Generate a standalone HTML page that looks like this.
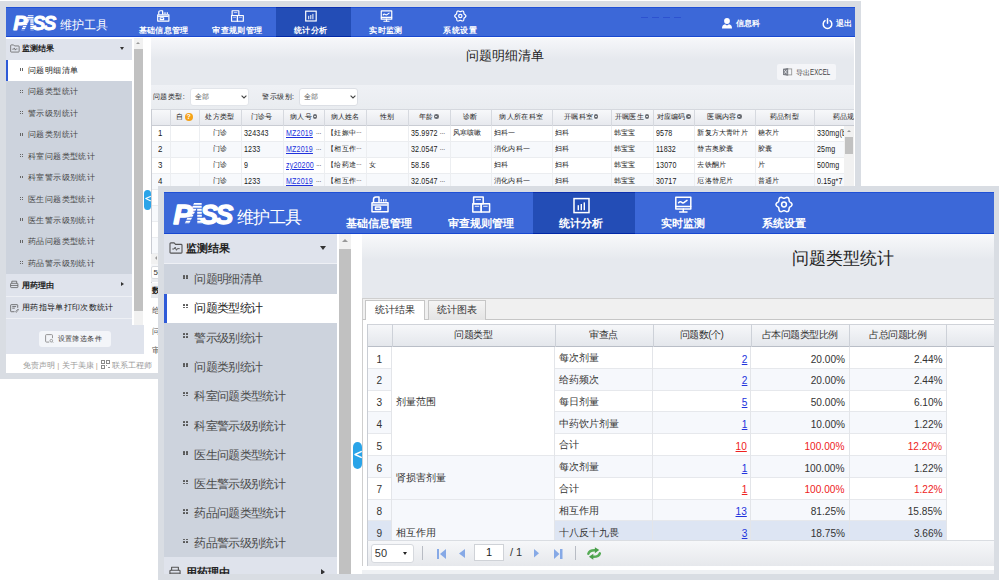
<!DOCTYPE html><html><head><meta charset="utf-8"><style>
html,body{margin:0;padding:0;background:#fff;width:1000px;height:582px;overflow:hidden;position:relative;font-family:"Liberation Sans",sans-serif;}
div{position:absolute;box-sizing:border-box;}
.t{white-space:nowrap;color:#333;}
svg{position:absolute;overflow:visible}
</style></head><body>
<div style="left:0px;top:1px;width:861px;height:378px;background:#d9dde3;"></div>
<div style="left:6px;top:7px;width:849px;height:366px;background:#fff;"></div>
<div style="left:6px;top:7px;width:849px;height:30.4px;background:#3c68d8;border-top:1px solid #1f50d6;border-bottom:1.6px solid #1848d0;"></div>
<svg style="left:13.2px;top:15.0px;width:43.8px;height:15.6px;" viewBox="0 0 60 21"><defs><clipPath id="acb"><rect x="0" y="-0.30" width="60" height="2.0"/><rect x="0" y="2.65" width="60" height="2.0"/><rect x="0" y="5.60" width="60" height="2.0"/><rect x="0" y="8.55" width="60" height="2.0"/><rect x="0" y="11.50" width="60" height="2.0"/><rect x="0" y="14.45" width="60" height="2.0"/><rect x="0" y="17.40" width="60" height="2.0"/><rect x="0" y="20.35" width="60" height="2.0"/></clipPath></defs><g fill="#fff" stroke="#fff" stroke-width="1.3" stroke-linejoin="round" font-family="Liberation Sans" font-weight="bold" font-style="italic" font-size="28"><text x="0.2" y="20.4" textLength="19" lengthAdjust="spacingAndGlyphs">P</text><text x="26.6" y="20.4" textLength="17.6" lengthAdjust="spacingAndGlyphs">S</text><text x="41.8" y="20.4" textLength="17.6" lengthAdjust="spacingAndGlyphs">S</text></g><g clip-path="url(#acb)" fill="#fff"><path d="M11.2,20.6 L20.6,0 L28.1,0 L28.4,20.6 Z M15.6,20.6 L23.6,4.5 L23.8,20.6 Z" fill-rule="evenodd"/></g></svg>
<div class="t" style="left:59.5px;top:16.8px;height:16px;line-height:16px;font-size:12px;text-align:left;color:#fff;letter-spacing:0.3px;">维护工具</div>
<div style="left:275.9px;top:7px;width:75px;height:30.4px;background:#234db6;border-top:1px solid #0c30b0;border-bottom:1.6px solid #0028a8;"></div>
<svg style="left:157.29999999999998px;top:9.6px;width:12.6px;height:12px;" viewBox="0 0 18 17"><g fill="none" stroke="#fff" stroke-width="1.7" stroke-linejoin="round"><rect x="1" y="6.8" width="16" height="9"/><line x1="1.5" y1="9" x2="16.5" y2="9"/><rect x="4.5" y="11" width="5" height="2.6"/><path d="M2.5,6.5 V3.5 Q2.5,1 5,1 H8 V6.5"/></g><g fill="#fff"><rect x="9.6" y="3.2" width="1.3" height="2.4"/><rect x="12" y="3.2" width="1.3" height="2.4"/><rect x="14.3" y="3.2" width="1.3" height="2.4"/></g></svg>
<div class="t" style="left:126.6px;top:24.5px;width:74px;height:11px;line-height:11px;font-size:8px;text-align:center;color:#fff;font-weight:bold;letter-spacing:0.35px;">基础信息管理</div>
<svg style="left:231.2px;top:9.6px;width:12.6px;height:12px;" viewBox="0 0 18 17"><g fill="none" stroke="#fff" stroke-width="1.7" stroke-linejoin="round"><rect x="1.6" y="1" width="9.6" height="6.8"/><rect x="0.8" y="7.8" width="8.4" height="8.2"/><rect x="9.2" y="7.8" width="8.4" height="8.2"/></g><g stroke="#fff" stroke-width="1.1" opacity="0.85"><line x1="4" y1="3.6" x2="9" y2="3.6"/><line x1="2.8" y1="10.3" x2="7.2" y2="10.3"/><line x1="11.2" y1="10.3" x2="15.6" y2="10.3"/></g></svg>
<div class="t" style="left:200.5px;top:24.5px;width:74px;height:11px;line-height:11px;font-size:8px;text-align:center;color:#fff;font-weight:bold;letter-spacing:0.35px;">审查规则管理</div>
<svg style="left:304.5px;top:9.6px;width:12.6px;height:12px;" viewBox="0 0 18 17"><g fill="none" stroke="#fff" stroke-width="1.7"><rect x="1" y="1.6" width="15" height="14"/></g><g fill="#fff"><rect x="4.6" y="8.2" width="1.4" height="5"/><rect x="7.6" y="7" width="1.4" height="6.2"/><rect x="10.6" y="5.4" width="1.4" height="7.8"/></g></svg>
<div class="t" style="left:273.8px;top:24.5px;width:74px;height:11px;line-height:11px;font-size:8px;text-align:center;color:#fff;font-weight:bold;letter-spacing:0.35px;">统计分析</div>
<svg style="left:379.7px;top:9.6px;width:12.6px;height:12px;" viewBox="0 0 18 17"><g fill="none" stroke="#fff" stroke-width="1.7" stroke-linejoin="round" stroke-linecap="round"><rect x="1.8" y="1.2" width="15" height="11.8"/><line x1="2" y1="10.6" x2="16.6" y2="10.6"/><path d="M4.6,6.8 Q6,5 7.5,6.2 Q9,7.6 10.5,6.2 L13,4.4"/><line x1="9.3" y1="13" x2="9.3" y2="15.6"/><line x1="5.6" y1="16" x2="13" y2="16"/></g></svg>
<div class="t" style="left:349.0px;top:24.5px;width:74px;height:11px;line-height:11px;font-size:8px;text-align:center;color:#fff;font-weight:bold;letter-spacing:0.35px;">实时监测</div>
<svg style="left:453.9px;top:9.6px;width:12.6px;height:12px;" viewBox="0 0 18 17"><g fill="none" stroke="#fff" stroke-width="1.7" stroke-linejoin="round"><path d="M17.00,8.50 L16.91,9.02 L16.67,9.51 L16.30,9.95 L15.86,10.34 L15.40,10.67 L14.97,10.97 L14.62,11.27 L14.37,11.60 L14.21,11.98 L14.13,12.43 L14.08,12.95 L14.02,13.52 L13.91,14.10 L13.71,14.64 L13.41,15.09 L13.00,15.43 L12.51,15.61 L11.96,15.65 L11.39,15.55 L10.84,15.36 L10.32,15.13 L9.84,14.91 L9.41,14.76 L9.00,14.70 L8.59,14.76 L8.16,14.91 L7.68,15.13 L7.16,15.36 L6.61,15.55 L6.04,15.65 L5.49,15.61 L5.00,15.43 L4.59,15.09 L4.29,14.64 L4.09,14.10 L3.98,13.52 L3.92,12.95 L3.87,12.43 L3.79,11.98 L3.63,11.60 L3.38,11.27 L3.03,10.97 L2.60,10.67 L2.14,10.34 L1.70,9.95 L1.33,9.51 L1.09,9.02 L1.00,8.50 L1.09,7.98 L1.33,7.49 L1.70,7.05 L2.14,6.66 L2.60,6.33 L3.03,6.03 L3.38,5.73 L3.63,5.40 L3.79,5.02 L3.87,4.57 L3.92,4.05 L3.98,3.48 L4.09,2.90 L4.29,2.36 L4.59,1.91 L5.00,1.57 L5.49,1.39 L6.04,1.35 L6.61,1.45 L7.16,1.64 L7.68,1.87 L8.16,2.09 L8.59,2.24 L9.00,2.30 L9.41,2.24 L9.84,2.09 L10.32,1.87 L10.84,1.64 L11.39,1.45 L11.96,1.35 L12.51,1.39 L13.00,1.57 L13.41,1.91 L13.71,2.36 L13.91,2.90 L14.02,3.48 L14.08,4.05 L14.13,4.57 L14.21,5.02 L14.37,5.40 L14.62,5.73 L14.97,6.03 L15.40,6.33 L15.86,6.66 L16.30,7.05 L16.67,7.49 L16.91,7.98Z"/><circle cx="9" cy="8.5" r="2.4"/></g></svg>
<div class="t" style="left:423.2px;top:24.5px;width:74px;height:11px;line-height:11px;font-size:8px;text-align:center;color:#fff;font-weight:bold;letter-spacing:0.35px;">系统设置</div>
<svg style="left:722px;top:18.2px;width:10px;height:10.5px;" viewBox="0 0 10 10.5"><g fill="#fff"><circle cx="5" cy="3" r="2.9"/><path d="M0,10.5 Q0,6.6 3,6.3 L5,7.4 L7,6.3 Q10,6.6 10,10.5 Z"/></g></svg>
<div class="t" style="left:736.4px;top:17.5px;height:11px;line-height:11px;font-size:8.2px;text-align:left;color:#fff;font-weight:bold;">信息科</div>
<svg style="left:821.6px;top:17.8px;width:11px;height:11px;" viewBox="0 0 11 11"><g fill="none" stroke="#fff" stroke-width="1.5" stroke-linecap="round"><path d="M3,2.6 A4.3,4.3 0 1 0 8,2.6"/><line x1="5.5" y1="0.8" x2="5.5" y2="5.2"/></g></svg>
<div class="t" style="left:835.5px;top:17.5px;height:11px;line-height:11px;font-size:8.2px;text-align:left;color:#fff;font-weight:bold;">退出</div>
<div style="left:641px;top:17.0px;width:40px;height:1px;background:repeating-linear-gradient(90deg,rgba(30,60,200,0.5) 0 7px,transparent 7px 11px);"></div>
<div style="left:6px;top:38px;width:126.2px;height:316px;background:#dfe3ec;"></div>
<div style="left:6px;top:37.4px;width:849px;height:1.6px;background:#fff;"></div>
<svg style="left:10px;top:43.5px;width:9.8px;height:9px;" viewBox="0 0 15 13"><g fill="none" stroke="#555" stroke-width="1.1" stroke-linejoin="round"><path d="M1,2 Q1,1 2,1 H5.5 L7,2.6 H13 Q14,2.6 14,3.6 V11 Q14,12 13,12 H2 Q1,12 1,11 Z"/><path d="M3.5,7.6 H5.5 L6.6,5.6 L8,9 L9,7.2 H11.5" stroke-width="0.9900000000000001"/></g></svg>
<div class="t" style="left:22px;top:42px;height:12px;line-height:12px;font-size:8.4px;text-align:left;color:#222;font-weight:bold;">监测结果</div>
<div style="left:120.4px;top:46.5px;width:0;height:0;border-left:2.6px solid transparent;border-right:2.6px solid transparent;border-top:3.4px solid #333;"></div>
<div style="left:6px;top:59.8px;width:126.2px;height:214.20000000000002px;background:#cdd3dd;"></div>
<div style="left:6px;top:59.8px;width:126.2px;height:21.42px;background:#fff;border-left:2px solid #2f5bd8;"></div>
<div style="left:19.8px;top:68.39999999999999px;width:1.25px;height:1.25px;background:#666;"></div>
<div style="left:19.8px;top:70.1px;width:1.25px;height:1.25px;background:#666;"></div>
<div style="left:21.6px;top:68.39999999999999px;width:1.25px;height:1.25px;background:#666;"></div>
<div style="left:21.6px;top:70.1px;width:1.25px;height:1.25px;background:#666;"></div>
<div class="t" style="left:28px;top:65.0px;height:12px;line-height:12px;font-size:8px;text-align:left;letter-spacing:0.4px;color:#222;">问题明细清单</div>
<div style="left:19.8px;top:89.82px;width:1.25px;height:1.25px;background:#666;"></div>
<div style="left:19.8px;top:91.52px;width:1.25px;height:1.25px;background:#666;"></div>
<div style="left:21.6px;top:89.82px;width:1.25px;height:1.25px;background:#666;"></div>
<div style="left:21.6px;top:91.52px;width:1.25px;height:1.25px;background:#666;"></div>
<div class="t" style="left:28px;top:86.42px;height:12px;line-height:12px;font-size:8px;text-align:left;letter-spacing:0.4px;color:#444;">问题类型统计</div>
<div style="left:19.8px;top:111.24px;width:1.25px;height:1.25px;background:#666;"></div>
<div style="left:19.8px;top:112.94px;width:1.25px;height:1.25px;background:#666;"></div>
<div style="left:21.6px;top:111.24px;width:1.25px;height:1.25px;background:#666;"></div>
<div style="left:21.6px;top:112.94px;width:1.25px;height:1.25px;background:#666;"></div>
<div class="t" style="left:28px;top:107.84px;height:12px;line-height:12px;font-size:8px;text-align:left;letter-spacing:0.4px;color:#444;">警示级别统计</div>
<div style="left:19.8px;top:132.66px;width:1.25px;height:1.25px;background:#666;"></div>
<div style="left:19.8px;top:134.35999999999999px;width:1.25px;height:1.25px;background:#666;"></div>
<div style="left:21.6px;top:132.66px;width:1.25px;height:1.25px;background:#666;"></div>
<div style="left:21.6px;top:134.35999999999999px;width:1.25px;height:1.25px;background:#666;"></div>
<div class="t" style="left:28px;top:129.26px;height:12px;line-height:12px;font-size:8px;text-align:left;letter-spacing:0.4px;color:#444;">问题类别统计</div>
<div style="left:19.8px;top:154.08px;width:1.25px;height:1.25px;background:#666;"></div>
<div style="left:19.8px;top:155.78px;width:1.25px;height:1.25px;background:#666;"></div>
<div style="left:21.6px;top:154.08px;width:1.25px;height:1.25px;background:#666;"></div>
<div style="left:21.6px;top:155.78px;width:1.25px;height:1.25px;background:#666;"></div>
<div class="t" style="left:28px;top:150.68px;height:12px;line-height:12px;font-size:8px;text-align:left;letter-spacing:0.4px;color:#444;">科室问题类型统计</div>
<div style="left:19.8px;top:175.5px;width:1.25px;height:1.25px;background:#666;"></div>
<div style="left:19.8px;top:177.2px;width:1.25px;height:1.25px;background:#666;"></div>
<div style="left:21.6px;top:175.5px;width:1.25px;height:1.25px;background:#666;"></div>
<div style="left:21.6px;top:177.2px;width:1.25px;height:1.25px;background:#666;"></div>
<div class="t" style="left:28px;top:172.1px;height:12px;line-height:12px;font-size:8px;text-align:left;letter-spacing:0.4px;color:#444;">科室警示级别统计</div>
<div style="left:19.8px;top:196.92px;width:1.25px;height:1.25px;background:#666;"></div>
<div style="left:19.8px;top:198.61999999999998px;width:1.25px;height:1.25px;background:#666;"></div>
<div style="left:21.6px;top:196.92px;width:1.25px;height:1.25px;background:#666;"></div>
<div style="left:21.6px;top:198.61999999999998px;width:1.25px;height:1.25px;background:#666;"></div>
<div class="t" style="left:28px;top:193.51999999999998px;height:12px;line-height:12px;font-size:8px;text-align:left;letter-spacing:0.4px;color:#444;">医生问题类型统计</div>
<div style="left:19.8px;top:218.34px;width:1.25px;height:1.25px;background:#666;"></div>
<div style="left:19.8px;top:220.04px;width:1.25px;height:1.25px;background:#666;"></div>
<div style="left:21.6px;top:218.34px;width:1.25px;height:1.25px;background:#666;"></div>
<div style="left:21.6px;top:220.04px;width:1.25px;height:1.25px;background:#666;"></div>
<div class="t" style="left:28px;top:214.94px;height:12px;line-height:12px;font-size:8px;text-align:left;letter-spacing:0.4px;color:#444;">医生警示级别统计</div>
<div style="left:19.8px;top:239.76000000000002px;width:1.25px;height:1.25px;background:#666;"></div>
<div style="left:19.8px;top:241.46px;width:1.25px;height:1.25px;background:#666;"></div>
<div style="left:21.6px;top:239.76000000000002px;width:1.25px;height:1.25px;background:#666;"></div>
<div style="left:21.6px;top:241.46px;width:1.25px;height:1.25px;background:#666;"></div>
<div class="t" style="left:28px;top:236.36px;height:12px;line-height:12px;font-size:8px;text-align:left;letter-spacing:0.4px;color:#444;">药品问题类型统计</div>
<div style="left:19.8px;top:261.18000000000006px;width:1.25px;height:1.25px;background:#666;"></div>
<div style="left:19.8px;top:262.88000000000005px;width:1.25px;height:1.25px;background:#666;"></div>
<div style="left:21.6px;top:261.18000000000006px;width:1.25px;height:1.25px;background:#666;"></div>
<div style="left:21.6px;top:262.88000000000005px;width:1.25px;height:1.25px;background:#666;"></div>
<div class="t" style="left:28px;top:257.78000000000003px;height:12px;line-height:12px;font-size:8px;text-align:left;letter-spacing:0.4px;color:#444;">药品警示级别统计</div>
<svg style="left:10px;top:280.2px;width:8.5px;height:8.5px;" viewBox="0 0 14 13"><g fill="none" stroke="#555" stroke-width="1.2" stroke-linejoin="round"><path d="M3,5 V1.5 H11 V5"/><rect x="1" y="5" width="12" height="7" rx="1"/><line x1="1" y1="8.5" x2="13" y2="8.5"/></g></svg>
<div class="t" style="left:22px;top:278.8px;height:12px;line-height:12px;font-size:8.4px;text-align:left;color:#222;font-weight:bold;">用药理由</div>
<div style="left:120.8px;top:282.4px;width:0;height:0;border-top:2.5px solid transparent;border-bottom:2.5px solid transparent;border-left:3px solid #333;"></div>
<div style="left:6px;top:295.7px;width:126.2px;height:1.3px;background:#eef0f5;"></div>
<svg style="left:10px;top:303.5px;width:9px;height:9px;" viewBox="0 0 14 14"><g fill="none" stroke="#555" stroke-width="1.2" stroke-linejoin="round"><path d="M12,6 V2 Q12,1 11,1 H2 Q1,1 1,2 V11 Q1,12 2,12 H7"/><line x1="3.5" y1="4" x2="9.5" y2="4"/><line x1="3.5" y1="6.5" x2="7.5" y2="6.5"/><path d="M8.5,12 L12.5,8 L13.5,9 L9.5,13 Z" stroke-width="0.96"/></g></svg>
<div class="t" style="left:22px;top:302px;height:12px;line-height:12px;font-size:8px;text-align:left;color:#111;letter-spacing:0.35px;">用药指导单打印次数统计</div>
<div style="left:6px;top:318px;width:126.2px;height:1.3px;background:#eef0f5;"></div>
<div style="left:39px;top:330.5px;width:71.8px;height:16.7px;background:#f3f5f9;border-radius:3px;"></div>
<svg style="left:44.9px;top:334px;width:8.4px;height:9px;" viewBox="0 0 14 15"><path d="M12.5,7 V2.5 Q12.5,1 11,1 H2.5 Q1,1 1,2.5 V12 Q1,13.5 2.5,13.5 H7" fill="none" stroke="#8a8a8a" stroke-width="1.5"/><circle cx="10.5" cy="11.2" r="2.2" fill="none" stroke="#8a8a8a" stroke-width="1.3"/><line x1="12.1" y1="12.8" x2="13.6" y2="14.3" stroke="#8a8a8a" stroke-width="1.3"/></svg>
<div class="t" style="left:57.5px;top:332.8px;height:12px;line-height:12px;font-size:7px;text-align:left;color:#333;letter-spacing:0.45px;">设置筛选条件</div>
<div style="left:6px;top:353.8px;width:849px;height:19.2px;background:#fff;"></div>
<div class="t" style="left:23px;top:359.5px;height:12px;line-height:12px;font-size:8px;text-align:left;color:#999;">免责声明 <span style='color:#b8a48c'>|</span> 关于美康 <span style='color:#b8a48c'>|</span></div>
<div style="left:100.8px;top:360.2px;width:4.2px;height:3.9px;border:0.8px solid #8a8a8a;"></div>
<div style="left:105.9px;top:360.2px;width:4.2px;height:3.9px;border:0.8px solid #8a8a8a;"></div>
<div style="left:100.8px;top:364.8px;width:4.2px;height:3.9px;border:0.8px solid #8a8a8a;"></div>
<div style="left:106.2px;top:365.2px;width:1.2px;height:1.2px;background:#999;"></div>
<div style="left:108.4px;top:367.2px;width:1.2px;height:1.2px;background:#999;"></div>
<div class="t" style="left:111.5px;top:359.5px;height:12px;line-height:12px;font-size:8px;text-align:left;color:#999;">联系工程师</div>
<div style="left:133.6px;top:38px;width:9.6px;height:286.5px;background:#f1f1f1;"></div>
<div style="left:133.6px;top:49px;width:9.6px;height:262px;background:#c1c1c1;"></div>
<div style="left:136.3px;top:41.8px;width:0;height:0;border-left:2.2px solid transparent;border-right:2.2px solid transparent;border-bottom:2.4px solid #999;"></div>
<div style="left:132.2px;top:324.5px;width:11.8px;height:29.3px;background:#dfe3ec;"></div>
<div style="left:144.2px;top:189.6px;width:6.9px;height:20px;background:#2aa4e8;border-radius:3.4px/3.7px;"></div>
<svg style="left:144.7px;top:196.3px;width:6px;height:5.2px;" viewBox="0 0 8 7"><path d="M7.2,0.6 L1,3.5 L7.2,6.4" fill="none" stroke="#fff" stroke-width="1.5" stroke-linecap="round" stroke-linejoin="round"/></svg>
<div style="left:151px;top:38px;width:703px;height:46.5px;background:linear-gradient(#f6f7fa,#e6e9ee 45%,#e6e9ee);"></div>
<div class="t" style="left:466px;top:48.5px;height:15px;line-height:15px;font-size:12.7px;text-align:left;color:#222;">问题明细清单</div>
<div style="left:777.3px;top:64.4px;width:58.3px;height:15.6px;background:#f4f5f8;border-radius:2px;"></div>
<svg style="left:782.5px;top:68px;width:9.2px;height:7.8px;" viewBox="0 0 9.2 7.8"><rect x="3.6" y="0.9" width="5.1" height="6" fill="none" stroke="#999" stroke-width="0.9"/><path d="M0,0.8 L5.2,0 V7.8 L0,7 Z" fill="#7d8087"/><path d="M1.3,2.2 L3.9,5.6 M3.9,2.2 L1.3,5.6" stroke="#e9ebef" stroke-width="0.9"/></svg>
<div class="t" style="left:795.5px;top:66.2px;height:12px;line-height:12px;font-size:7px;text-align:left;color:#444;">导出<span style='display:inline-block;font-size:8.6px;transform:scaleX(0.72);transform-origin:0 50%;'>EXCEL</span></div>
<div style="left:151px;top:84.5px;width:703px;height:24px;background:linear-gradient(#eff1f5,#e9ecf0);"></div>
<div class="t" style="left:152.8px;top:91px;height:12px;line-height:12px;font-size:7px;text-align:left;color:#222;letter-spacing:0.5px;">问题类型:</div>
<div style="left:189.8px;top:88.2px;width:59.2px;height:17.6px;background:#fff;border-radius:3px;border:1px solid #e2e5ea;"></div>
<div class="t" style="left:194.5px;top:91.2px;height:12px;line-height:12px;font-size:7px;text-align:left;color:#555;letter-spacing:0.3px;">全部</div>
<svg style="left:241px;top:95px;width:6px;height:4px;" viewBox="0 0 6 4"><path d="M0.6,0.6 L3,3 L5.4,0.6" fill="none" stroke="#444" stroke-width="1.1"/></svg>
<div class="t" style="left:262px;top:91px;height:12px;line-height:12px;font-size:7px;text-align:left;color:#222;letter-spacing:0.5px;">警示级别:</div>
<div style="left:299.4px;top:88px;width:59px;height:18px;background:#fff;border-radius:3px;border:1px solid #dcdfe5;"></div>
<div class="t" style="left:304px;top:91.2px;height:12px;line-height:12px;font-size:7px;text-align:left;color:#555;letter-spacing:0.3px;">全部</div>
<svg style="left:350.4px;top:95px;width:6px;height:4px;" viewBox="0 0 6 4"><path d="M0.6,0.6 L3,3 L5.4,0.6" fill="none" stroke="#444" stroke-width="1.1"/></svg>
<div style="left:151px;top:108.5px;width:703px;height:264.5px;overflow:hidden;background:#fff;">
<div style="left:0px;top:0.5px;width:703px;height:16.6px;background:linear-gradient(#f7f8fa,#e7e9ee);border-top:1px solid #d5d8de;border-bottom:1px solid #c9ccd3;"></div>
<div style="left:0.4000000000000057px;top:0.5px;width:18.099999999999994px;height:16.6px;border-left:1px solid #d6d9df;"></div>
<div class="t" style="left:0.4000000000000057px;top:0.5px;width:18.099999999999994px;height:16.6px;line-height:15.600000000000001px;font-size:7px;letter-spacing:0.3px;text-align:center;color:#1a1a1a;"></div>
<div style="left:18.5px;top:0.5px;width:29.900000000000006px;height:16.6px;border-left:1px solid #d6d9df;"></div>
<div class="t" style="left:18.5px;top:0.5px;width:29.900000000000006px;height:16.6px;line-height:15.600000000000001px;font-size:7px;letter-spacing:0.3px;text-align:center;color:#1a1a1a;">自<span style='display:inline-block;margin-left:1.5px;width:8.5px;height:8px;border-radius:4.2px;background:#f5a218;color:#fff;font-size:7px;line-height:8px;text-align:center;font-weight:bold;vertical-align:0px'>?</span></div>
<div style="left:48.400000000000006px;top:0.5px;width:41.400000000000006px;height:16.6px;border-left:1px solid #d6d9df;"></div>
<div class="t" style="left:48.400000000000006px;top:0.5px;width:41.400000000000006px;height:16.6px;line-height:15.600000000000001px;font-size:7px;letter-spacing:0.3px;text-align:center;color:#1a1a1a;">处方类型</div>
<div style="left:89.80000000000001px;top:0.5px;width:42.099999999999966px;height:16.6px;border-left:1px solid #d6d9df;"></div>
<div class="t" style="left:89.80000000000001px;top:0.5px;width:42.099999999999966px;height:16.6px;line-height:15.600000000000001px;font-size:7px;letter-spacing:0.3px;text-align:center;color:#1a1a1a;">门诊号</div>
<div style="left:131.89999999999998px;top:0.5px;width:41.400000000000034px;height:16.6px;border-left:1px solid #d6d9df;"></div>
<div class="t" style="left:131.89999999999998px;top:0.5px;width:41.400000000000034px;height:16.6px;line-height:15.600000000000001px;font-size:7px;letter-spacing:0.3px;text-align:center;color:#1a1a1a;">病人号<span style='display:inline-block;width:4.6px;height:4.6px;border-radius:2.3px;background:#6a6d73;margin-left:0.6px;vertical-align:0.5px;position:relative'><span style='position:absolute;left:1.3px;top:2px;width:2px;height:0.6px;background:#ddd'></span></span></div>
<div style="left:173.3px;top:0.5px;width:41.69999999999999px;height:16.6px;border-left:1px solid #d6d9df;"></div>
<div class="t" style="left:173.3px;top:0.5px;width:41.69999999999999px;height:16.6px;line-height:15.600000000000001px;font-size:7px;letter-spacing:0.3px;text-align:center;color:#1a1a1a;">病人姓名</div>
<div style="left:215px;top:0.5px;width:42.19999999999999px;height:16.6px;border-left:1px solid #d6d9df;"></div>
<div class="t" style="left:215px;top:0.5px;width:42.19999999999999px;height:16.6px;line-height:15.600000000000001px;font-size:7px;letter-spacing:0.3px;text-align:center;color:#1a1a1a;">性别</div>
<div style="left:257.2px;top:0.5px;width:41.400000000000034px;height:16.6px;border-left:1px solid #d6d9df;"></div>
<div class="t" style="left:257.2px;top:0.5px;width:41.400000000000034px;height:16.6px;line-height:15.600000000000001px;font-size:7px;letter-spacing:0.3px;text-align:center;color:#1a1a1a;">年龄<span style='display:inline-block;width:4.6px;height:4.6px;border-radius:2.3px;background:#6a6d73;margin-left:0.6px;vertical-align:0.5px;position:relative'><span style='position:absolute;left:1.3px;top:2px;width:2px;height:0.6px;background:#ddd'></span></span></div>
<div style="left:298.6px;top:0.5px;width:41.39999999999998px;height:16.6px;border-left:1px solid #d6d9df;"></div>
<div class="t" style="left:298.6px;top:0.5px;width:41.39999999999998px;height:16.6px;line-height:15.600000000000001px;font-size:7px;letter-spacing:0.3px;text-align:center;color:#1a1a1a;">诊断</div>
<div style="left:340px;top:0.5px;width:60.5px;height:16.6px;border-left:1px solid #d6d9df;"></div>
<div class="t" style="left:340px;top:0.5px;width:60.5px;height:16.6px;line-height:15.600000000000001px;font-size:7px;letter-spacing:0.3px;text-align:center;color:#1a1a1a;">病人所在科室</div>
<div style="left:400.5px;top:0.5px;width:59.39999999999998px;height:16.6px;border-left:1px solid #d6d9df;"></div>
<div class="t" style="left:400.5px;top:0.5px;width:59.39999999999998px;height:16.6px;line-height:15.600000000000001px;font-size:7px;letter-spacing:0.3px;text-align:center;color:#1a1a1a;">开嘱科室<span style='display:inline-block;width:4.6px;height:4.6px;border-radius:2.3px;background:#6a6d73;margin-left:0.6px;vertical-align:0.5px;position:relative'><span style='position:absolute;left:1.3px;top:2px;width:2px;height:0.6px;background:#ddd'></span></span></div>
<div style="left:459.9px;top:0.5px;width:42.10000000000002px;height:16.6px;border-left:1px solid #d6d9df;"></div>
<div class="t" style="left:459.9px;top:0.5px;width:42.10000000000002px;height:16.6px;line-height:15.600000000000001px;font-size:7px;letter-spacing:0.3px;text-align:center;color:#1a1a1a;">开嘱医生<span style='display:inline-block;width:4.6px;height:4.6px;border-radius:2.3px;background:#6a6d73;margin-left:0.6px;vertical-align:0.5px;position:relative'><span style='position:absolute;left:1.3px;top:2px;width:2px;height:0.6px;background:#ddd'></span></span></div>
<div style="left:502px;top:0.5px;width:41.39999999999998px;height:16.6px;border-left:1px solid #d6d9df;"></div>
<div class="t" style="left:502px;top:0.5px;width:41.39999999999998px;height:16.6px;line-height:15.600000000000001px;font-size:7px;letter-spacing:0.3px;text-align:center;color:#1a1a1a;">对应编码<span style='display:inline-block;width:4.6px;height:4.6px;border-radius:2.3px;background:#6a6d73;margin-left:0.6px;vertical-align:0.5px;position:relative'><span style='position:absolute;left:1.3px;top:2px;width:2px;height:0.6px;background:#ddd'></span></span></div>
<div style="left:543.4px;top:0.5px;width:60.10000000000002px;height:16.6px;border-left:1px solid #d6d9df;"></div>
<div class="t" style="left:543.4px;top:0.5px;width:60.10000000000002px;height:16.6px;line-height:15.600000000000001px;font-size:7px;letter-spacing:0.3px;text-align:center;color:#1a1a1a;">医嘱内容<span style='display:inline-block;width:4.6px;height:4.6px;border-radius:2.3px;background:#6a6d73;margin-left:0.6px;vertical-align:0.5px;position:relative'><span style='position:absolute;left:1.3px;top:2px;width:2px;height:0.6px;background:#ddd'></span></span></div>
<div style="left:603.5px;top:0.5px;width:59.799999999999955px;height:16.6px;border-left:1px solid #d6d9df;"></div>
<div class="t" style="left:603.5px;top:0.5px;width:59.799999999999955px;height:16.6px;line-height:15.600000000000001px;font-size:7px;letter-spacing:0.3px;text-align:center;color:#1a1a1a;">药品剂型</div>
<div style="left:663.3px;top:0.5px;width:65.70000000000005px;height:16.6px;border-left:1px solid #d6d9df;"></div>
<div class="t" style="left:663.3px;top:0.5px;width:65.70000000000005px;height:16.6px;line-height:15.600000000000001px;font-size:7px;letter-spacing:0.3px;text-align:center;color:#1a1a1a;">药品规格</div>
<div style="left:0;top:17.099999999999994px;width:703px;height:16px;background:#fff;border-bottom:1px solid #ebedf0;"></div>
<div style="left:0.4000000000000057px;top:17.099999999999994px;width:18.099999999999994px;height:16px;border-left:1px solid #eceef1;"></div>
<div class="t" style="left:7.400000000000006px;top:16.799999999999994px;width:11.099999999999994px;height:16px;line-height:16px;font-size:7px;letter-spacing:0.2px;text-align:left;color:#1a1a1a;overflow:hidden;"><span style='display:inline-block;font-size:9.4px;transform:scaleX(0.84);transform-origin:0 50%'>1</span></div>
<div style="left:18.5px;top:17.099999999999994px;width:29.900000000000006px;height:16px;border-left:1px solid #eceef1;"></div>
<div style="left:48.400000000000006px;top:17.099999999999994px;width:41.400000000000006px;height:16px;border-left:1px solid #eceef1;"></div>
<div class="t" style="left:48.400000000000006px;top:16.799999999999994px;width:41.400000000000006px;height:16px;line-height:16px;font-size:7px;letter-spacing:0.2px;text-align:center;color:#1a1a1a;overflow:hidden;">门诊</div>
<div style="left:89.80000000000001px;top:17.099999999999994px;width:42.099999999999966px;height:16px;border-left:1px solid #eceef1;"></div>
<div class="t" style="left:92.80000000000001px;top:16.799999999999994px;width:39.099999999999966px;height:16px;line-height:16px;font-size:7px;letter-spacing:0.2px;text-align:left;color:#1a1a1a;overflow:hidden;"><span style='display:inline-block;font-size:9.6px;transform:scaleX(0.74);transform-origin:0 50%;margin-right:-6.6px;'>324343</span></div>
<div style="left:131.89999999999998px;top:17.099999999999994px;width:41.400000000000034px;height:16px;border-left:1px solid #eceef1;"></div>
<div class="t" style="left:134.89999999999998px;top:16.799999999999994px;width:38.400000000000034px;height:16px;line-height:16px;font-size:7px;letter-spacing:0.2px;text-align:left;color:#2233dd;overflow:hidden;"><span style='display:inline-block;font-size:9.6px;transform:scaleX(0.74);transform-origin:0 50%;margin-right:-6.6px;text-decoration:underline;'>MZ2019</span><span style='letter-spacing:-0.6px;color:#444'>···</span></div>
<div style="left:173.3px;top:17.099999999999994px;width:41.69999999999999px;height:16px;border-left:1px solid #eceef1;"></div>
<div class="t" style="left:176.3px;top:16.799999999999994px;width:38.69999999999999px;height:16px;line-height:16px;font-size:7px;letter-spacing:0.2px;text-align:left;color:#1a1a1a;overflow:hidden;">【妊娠中<span style='letter-spacing:-0.6px;color:#444'>···</span></div>
<div style="left:215px;top:17.099999999999994px;width:42.19999999999999px;height:16px;border-left:1px solid #eceef1;"></div>
<div style="left:257.2px;top:17.099999999999994px;width:41.400000000000034px;height:16px;border-left:1px solid #eceef1;"></div>
<div class="t" style="left:260.2px;top:16.799999999999994px;width:38.400000000000034px;height:16px;line-height:16px;font-size:7px;letter-spacing:0.2px;text-align:left;color:#1a1a1a;overflow:hidden;"><span style='display:inline-block;font-size:9.6px;transform:scaleX(0.74);transform-origin:0 50%;margin-right:-7.7px;'>35.9972</span><span style='letter-spacing:-0.6px;color:#444'>···</span></div>
<div style="left:298.6px;top:17.099999999999994px;width:41.39999999999998px;height:16px;border-left:1px solid #eceef1;"></div>
<div class="t" style="left:301.6px;top:16.799999999999994px;width:38.39999999999998px;height:16px;line-height:16px;font-size:7px;letter-spacing:0.2px;text-align:left;color:#1a1a1a;overflow:hidden;">风寒咳嗽</div>
<div style="left:340px;top:17.099999999999994px;width:60.5px;height:16px;border-left:1px solid #eceef1;"></div>
<div class="t" style="left:343px;top:16.799999999999994px;width:57.5px;height:16px;line-height:16px;font-size:7px;letter-spacing:0.2px;text-align:left;color:#1a1a1a;overflow:hidden;">妇科一</div>
<div style="left:400.5px;top:17.099999999999994px;width:59.39999999999998px;height:16px;border-left:1px solid #eceef1;"></div>
<div class="t" style="left:403.5px;top:16.799999999999994px;width:56.39999999999998px;height:16px;line-height:16px;font-size:7px;letter-spacing:0.2px;text-align:left;color:#1a1a1a;overflow:hidden;">妇科</div>
<div style="left:459.9px;top:17.099999999999994px;width:42.10000000000002px;height:16px;border-left:1px solid #eceef1;"></div>
<div class="t" style="left:462.9px;top:16.799999999999994px;width:39.10000000000002px;height:16px;line-height:16px;font-size:7px;letter-spacing:0.2px;text-align:left;color:#1a1a1a;overflow:hidden;">韩宝宝</div>
<div style="left:502px;top:17.099999999999994px;width:41.39999999999998px;height:16px;border-left:1px solid #eceef1;"></div>
<div class="t" style="left:505px;top:16.799999999999994px;width:38.39999999999998px;height:16px;line-height:16px;font-size:7px;letter-spacing:0.2px;text-align:left;color:#1a1a1a;overflow:hidden;"><span style='display:inline-block;font-size:9.6px;transform:scaleX(0.74);transform-origin:0 50%;margin-right:-4.4px;'>9578</span></div>
<div style="left:543.4px;top:17.099999999999994px;width:60.10000000000002px;height:16px;border-left:1px solid #eceef1;"></div>
<div class="t" style="left:546.4px;top:16.799999999999994px;width:57.10000000000002px;height:16px;line-height:16px;font-size:7px;letter-spacing:0.2px;text-align:left;color:#1a1a1a;overflow:hidden;">新复方大青叶片</div>
<div style="left:603.5px;top:17.099999999999994px;width:59.799999999999955px;height:16px;border-left:1px solid #eceef1;"></div>
<div class="t" style="left:606.5px;top:16.799999999999994px;width:56.799999999999955px;height:16px;line-height:16px;font-size:7px;letter-spacing:0.2px;text-align:left;color:#1a1a1a;overflow:hidden;">糖衣片</div>
<div style="left:663.3px;top:17.099999999999994px;width:65.70000000000005px;height:16px;border-left:1px solid #eceef1;"></div>
<div class="t" style="left:666.3px;top:16.799999999999994px;width:62.700000000000045px;height:16px;line-height:16px;font-size:7px;letter-spacing:0.2px;text-align:left;color:#1a1a1a;overflow:hidden;"><span style='display:inline-block;font-size:9.6px;transform:scaleX(0.74);transform-origin:0 50%;margin-right:-7.7px;'>330mg(b</span></div>
<div style="left:0;top:33.099999999999994px;width:703px;height:16px;background:#f7f9fc;border-bottom:1px solid #ebedf0;"></div>
<div style="left:0.4000000000000057px;top:33.099999999999994px;width:18.099999999999994px;height:16px;border-left:1px solid #eceef1;"></div>
<div class="t" style="left:7.400000000000006px;top:32.8px;width:11.099999999999994px;height:16px;line-height:16px;font-size:7px;letter-spacing:0.2px;text-align:left;color:#1a1a1a;overflow:hidden;"><span style='display:inline-block;font-size:9.4px;transform:scaleX(0.84);transform-origin:0 50%'>2</span></div>
<div style="left:18.5px;top:33.099999999999994px;width:29.900000000000006px;height:16px;border-left:1px solid #eceef1;"></div>
<div style="left:48.400000000000006px;top:33.099999999999994px;width:41.400000000000006px;height:16px;border-left:1px solid #eceef1;"></div>
<div class="t" style="left:48.400000000000006px;top:32.8px;width:41.400000000000006px;height:16px;line-height:16px;font-size:7px;letter-spacing:0.2px;text-align:center;color:#1a1a1a;overflow:hidden;">门诊</div>
<div style="left:89.80000000000001px;top:33.099999999999994px;width:42.099999999999966px;height:16px;border-left:1px solid #eceef1;"></div>
<div class="t" style="left:92.80000000000001px;top:32.8px;width:39.099999999999966px;height:16px;line-height:16px;font-size:7px;letter-spacing:0.2px;text-align:left;color:#1a1a1a;overflow:hidden;"><span style='display:inline-block;font-size:9.6px;transform:scaleX(0.74);transform-origin:0 50%;margin-right:-4.4px;'>1233</span></div>
<div style="left:131.89999999999998px;top:33.099999999999994px;width:41.400000000000034px;height:16px;border-left:1px solid #eceef1;"></div>
<div class="t" style="left:134.89999999999998px;top:32.8px;width:38.400000000000034px;height:16px;line-height:16px;font-size:7px;letter-spacing:0.2px;text-align:left;color:#2233dd;overflow:hidden;"><span style='display:inline-block;font-size:9.6px;transform:scaleX(0.74);transform-origin:0 50%;margin-right:-6.6px;text-decoration:underline;'>MZ2019</span><span style='letter-spacing:-0.6px;color:#444'>···</span></div>
<div style="left:173.3px;top:33.099999999999994px;width:41.69999999999999px;height:16px;border-left:1px solid #eceef1;"></div>
<div class="t" style="left:176.3px;top:32.8px;width:38.69999999999999px;height:16px;line-height:16px;font-size:7px;letter-spacing:0.2px;text-align:left;color:#1a1a1a;overflow:hidden;">【相互作<span style='letter-spacing:-0.6px;color:#444'>···</span></div>
<div style="left:215px;top:33.099999999999994px;width:42.19999999999999px;height:16px;border-left:1px solid #eceef1;"></div>
<div style="left:257.2px;top:33.099999999999994px;width:41.400000000000034px;height:16px;border-left:1px solid #eceef1;"></div>
<div class="t" style="left:260.2px;top:32.8px;width:38.400000000000034px;height:16px;line-height:16px;font-size:7px;letter-spacing:0.2px;text-align:left;color:#1a1a1a;overflow:hidden;"><span style='display:inline-block;font-size:9.6px;transform:scaleX(0.74);transform-origin:0 50%;margin-right:-7.7px;'>32.0547</span><span style='letter-spacing:-0.6px;color:#444'>···</span></div>
<div style="left:298.6px;top:33.099999999999994px;width:41.39999999999998px;height:16px;border-left:1px solid #eceef1;"></div>
<div style="left:340px;top:33.099999999999994px;width:60.5px;height:16px;border-left:1px solid #eceef1;"></div>
<div class="t" style="left:343px;top:32.8px;width:57.5px;height:16px;line-height:16px;font-size:7px;letter-spacing:0.2px;text-align:left;color:#1a1a1a;overflow:hidden;">消化内科一</div>
<div style="left:400.5px;top:33.099999999999994px;width:59.39999999999998px;height:16px;border-left:1px solid #eceef1;"></div>
<div class="t" style="left:403.5px;top:32.8px;width:56.39999999999998px;height:16px;line-height:16px;font-size:7px;letter-spacing:0.2px;text-align:left;color:#1a1a1a;overflow:hidden;">妇科</div>
<div style="left:459.9px;top:33.099999999999994px;width:42.10000000000002px;height:16px;border-left:1px solid #eceef1;"></div>
<div class="t" style="left:462.9px;top:32.8px;width:39.10000000000002px;height:16px;line-height:16px;font-size:7px;letter-spacing:0.2px;text-align:left;color:#1a1a1a;overflow:hidden;">韩宝宝</div>
<div style="left:502px;top:33.099999999999994px;width:41.39999999999998px;height:16px;border-left:1px solid #eceef1;"></div>
<div class="t" style="left:505px;top:32.8px;width:38.39999999999998px;height:16px;line-height:16px;font-size:7px;letter-spacing:0.2px;text-align:left;color:#1a1a1a;overflow:hidden;"><span style='display:inline-block;font-size:9.6px;transform:scaleX(0.74);transform-origin:0 50%;margin-right:-5.5px;'>11832</span></div>
<div style="left:543.4px;top:33.099999999999994px;width:60.10000000000002px;height:16px;border-left:1px solid #eceef1;"></div>
<div class="t" style="left:546.4px;top:32.8px;width:57.10000000000002px;height:16px;line-height:16px;font-size:7px;letter-spacing:0.2px;text-align:left;color:#1a1a1a;overflow:hidden;">替吉奥胶囊</div>
<div style="left:603.5px;top:33.099999999999994px;width:59.799999999999955px;height:16px;border-left:1px solid #eceef1;"></div>
<div class="t" style="left:606.5px;top:32.8px;width:56.799999999999955px;height:16px;line-height:16px;font-size:7px;letter-spacing:0.2px;text-align:left;color:#1a1a1a;overflow:hidden;">胶囊</div>
<div style="left:663.3px;top:33.099999999999994px;width:65.70000000000005px;height:16px;border-left:1px solid #eceef1;"></div>
<div class="t" style="left:666.3px;top:32.8px;width:62.700000000000045px;height:16px;line-height:16px;font-size:7px;letter-spacing:0.2px;text-align:left;color:#1a1a1a;overflow:hidden;"><span style='display:inline-block;font-size:9.6px;transform:scaleX(0.74);transform-origin:0 50%;margin-right:-4.4px;'>25mg</span></div>
<div style="left:0;top:49.099999999999994px;width:703px;height:16px;background:#fff;border-bottom:1px solid #ebedf0;"></div>
<div style="left:0.4000000000000057px;top:49.099999999999994px;width:18.099999999999994px;height:16px;border-left:1px solid #eceef1;"></div>
<div class="t" style="left:7.400000000000006px;top:48.8px;width:11.099999999999994px;height:16px;line-height:16px;font-size:7px;letter-spacing:0.2px;text-align:left;color:#1a1a1a;overflow:hidden;"><span style='display:inline-block;font-size:9.4px;transform:scaleX(0.84);transform-origin:0 50%'>3</span></div>
<div style="left:18.5px;top:49.099999999999994px;width:29.900000000000006px;height:16px;border-left:1px solid #eceef1;"></div>
<div style="left:48.400000000000006px;top:49.099999999999994px;width:41.400000000000006px;height:16px;border-left:1px solid #eceef1;"></div>
<div class="t" style="left:48.400000000000006px;top:48.8px;width:41.400000000000006px;height:16px;line-height:16px;font-size:7px;letter-spacing:0.2px;text-align:center;color:#1a1a1a;overflow:hidden;">门诊</div>
<div style="left:89.80000000000001px;top:49.099999999999994px;width:42.099999999999966px;height:16px;border-left:1px solid #eceef1;"></div>
<div class="t" style="left:92.80000000000001px;top:48.8px;width:39.099999999999966px;height:16px;line-height:16px;font-size:7px;letter-spacing:0.2px;text-align:left;color:#1a1a1a;overflow:hidden;"><span style='display:inline-block;font-size:9.6px;transform:scaleX(0.74);transform-origin:0 50%;margin-right:-1.1px;'>9</span></div>
<div style="left:131.89999999999998px;top:49.099999999999994px;width:41.400000000000034px;height:16px;border-left:1px solid #eceef1;"></div>
<div class="t" style="left:134.89999999999998px;top:48.8px;width:38.400000000000034px;height:16px;line-height:16px;font-size:7px;letter-spacing:0.2px;text-align:left;color:#2233dd;overflow:hidden;"><span style='display:inline-block;font-size:9.6px;transform:scaleX(0.74);transform-origin:0 50%;margin-right:-7.7px;text-decoration:underline;'>zy20200</span><span style='letter-spacing:-0.6px;color:#444'>···</span></div>
<div style="left:173.3px;top:49.099999999999994px;width:41.69999999999999px;height:16px;border-left:1px solid #eceef1;"></div>
<div class="t" style="left:176.3px;top:48.8px;width:38.69999999999999px;height:16px;line-height:16px;font-size:7px;letter-spacing:0.2px;text-align:left;color:#1a1a1a;overflow:hidden;">【给药途<span style='letter-spacing:-0.6px;color:#444'>···</span></div>
<div style="left:215px;top:49.099999999999994px;width:42.19999999999999px;height:16px;border-left:1px solid #eceef1;"></div>
<div class="t" style="left:218px;top:48.8px;width:39.19999999999999px;height:16px;line-height:16px;font-size:7px;letter-spacing:0.2px;text-align:left;color:#1a1a1a;overflow:hidden;">女</div>
<div style="left:257.2px;top:49.099999999999994px;width:41.400000000000034px;height:16px;border-left:1px solid #eceef1;"></div>
<div class="t" style="left:260.2px;top:48.8px;width:38.400000000000034px;height:16px;line-height:16px;font-size:7px;letter-spacing:0.2px;text-align:left;color:#1a1a1a;overflow:hidden;"><span style='display:inline-block;font-size:9.6px;transform:scaleX(0.74);transform-origin:0 50%;margin-right:-5.5px;'>58.56</span></div>
<div style="left:298.6px;top:49.099999999999994px;width:41.39999999999998px;height:16px;border-left:1px solid #eceef1;"></div>
<div style="left:340px;top:49.099999999999994px;width:60.5px;height:16px;border-left:1px solid #eceef1;"></div>
<div class="t" style="left:343px;top:48.8px;width:57.5px;height:16px;line-height:16px;font-size:7px;letter-spacing:0.2px;text-align:left;color:#1a1a1a;overflow:hidden;">妇科</div>
<div style="left:400.5px;top:49.099999999999994px;width:59.39999999999998px;height:16px;border-left:1px solid #eceef1;"></div>
<div class="t" style="left:403.5px;top:48.8px;width:56.39999999999998px;height:16px;line-height:16px;font-size:7px;letter-spacing:0.2px;text-align:left;color:#1a1a1a;overflow:hidden;">妇科</div>
<div style="left:459.9px;top:49.099999999999994px;width:42.10000000000002px;height:16px;border-left:1px solid #eceef1;"></div>
<div class="t" style="left:462.9px;top:48.8px;width:39.10000000000002px;height:16px;line-height:16px;font-size:7px;letter-spacing:0.2px;text-align:left;color:#1a1a1a;overflow:hidden;">韩宝宝</div>
<div style="left:502px;top:49.099999999999994px;width:41.39999999999998px;height:16px;border-left:1px solid #eceef1;"></div>
<div class="t" style="left:505px;top:48.8px;width:38.39999999999998px;height:16px;line-height:16px;font-size:7px;letter-spacing:0.2px;text-align:left;color:#1a1a1a;overflow:hidden;"><span style='display:inline-block;font-size:9.6px;transform:scaleX(0.74);transform-origin:0 50%;margin-right:-5.5px;'>13070</span></div>
<div style="left:543.4px;top:49.099999999999994px;width:60.10000000000002px;height:16px;border-left:1px solid #eceef1;"></div>
<div class="t" style="left:546.4px;top:48.8px;width:57.10000000000002px;height:16px;line-height:16px;font-size:7px;letter-spacing:0.2px;text-align:left;color:#1a1a1a;overflow:hidden;">去铁酮片</div>
<div style="left:603.5px;top:49.099999999999994px;width:59.799999999999955px;height:16px;border-left:1px solid #eceef1;"></div>
<div class="t" style="left:606.5px;top:48.8px;width:56.799999999999955px;height:16px;line-height:16px;font-size:7px;letter-spacing:0.2px;text-align:left;color:#1a1a1a;overflow:hidden;">片</div>
<div style="left:663.3px;top:49.099999999999994px;width:65.70000000000005px;height:16px;border-left:1px solid #eceef1;"></div>
<div class="t" style="left:666.3px;top:48.8px;width:62.700000000000045px;height:16px;line-height:16px;font-size:7px;letter-spacing:0.2px;text-align:left;color:#1a1a1a;overflow:hidden;"><span style='display:inline-block;font-size:9.6px;transform:scaleX(0.74);transform-origin:0 50%;margin-right:-5.5px;'>500mg</span></div>
<div style="left:0;top:65.1px;width:703px;height:16px;background:#f7f9fc;border-bottom:1px solid #ebedf0;"></div>
<div style="left:0.4000000000000057px;top:65.1px;width:18.099999999999994px;height:16px;border-left:1px solid #eceef1;"></div>
<div class="t" style="left:7.400000000000006px;top:64.8px;width:11.099999999999994px;height:16px;line-height:16px;font-size:7px;letter-spacing:0.2px;text-align:left;color:#1a1a1a;overflow:hidden;"><span style='display:inline-block;font-size:9.4px;transform:scaleX(0.84);transform-origin:0 50%'>4</span></div>
<div style="left:18.5px;top:65.1px;width:29.900000000000006px;height:16px;border-left:1px solid #eceef1;"></div>
<div style="left:48.400000000000006px;top:65.1px;width:41.400000000000006px;height:16px;border-left:1px solid #eceef1;"></div>
<div class="t" style="left:48.400000000000006px;top:64.8px;width:41.400000000000006px;height:16px;line-height:16px;font-size:7px;letter-spacing:0.2px;text-align:center;color:#1a1a1a;overflow:hidden;">门诊</div>
<div style="left:89.80000000000001px;top:65.1px;width:42.099999999999966px;height:16px;border-left:1px solid #eceef1;"></div>
<div class="t" style="left:92.80000000000001px;top:64.8px;width:39.099999999999966px;height:16px;line-height:16px;font-size:7px;letter-spacing:0.2px;text-align:left;color:#1a1a1a;overflow:hidden;"><span style='display:inline-block;font-size:9.6px;transform:scaleX(0.74);transform-origin:0 50%;margin-right:-4.4px;'>1233</span></div>
<div style="left:131.89999999999998px;top:65.1px;width:41.400000000000034px;height:16px;border-left:1px solid #eceef1;"></div>
<div class="t" style="left:134.89999999999998px;top:64.8px;width:38.400000000000034px;height:16px;line-height:16px;font-size:7px;letter-spacing:0.2px;text-align:left;color:#2233dd;overflow:hidden;"><span style='display:inline-block;font-size:9.6px;transform:scaleX(0.74);transform-origin:0 50%;margin-right:-6.6px;text-decoration:underline;'>MZ2019</span><span style='letter-spacing:-0.6px;color:#444'>···</span></div>
<div style="left:173.3px;top:65.1px;width:41.69999999999999px;height:16px;border-left:1px solid #eceef1;"></div>
<div class="t" style="left:176.3px;top:64.8px;width:38.69999999999999px;height:16px;line-height:16px;font-size:7px;letter-spacing:0.2px;text-align:left;color:#1a1a1a;overflow:hidden;">【相互作<span style='letter-spacing:-0.6px;color:#444'>···</span></div>
<div style="left:215px;top:65.1px;width:42.19999999999999px;height:16px;border-left:1px solid #eceef1;"></div>
<div style="left:257.2px;top:65.1px;width:41.400000000000034px;height:16px;border-left:1px solid #eceef1;"></div>
<div class="t" style="left:260.2px;top:64.8px;width:38.400000000000034px;height:16px;line-height:16px;font-size:7px;letter-spacing:0.2px;text-align:left;color:#1a1a1a;overflow:hidden;"><span style='display:inline-block;font-size:9.6px;transform:scaleX(0.74);transform-origin:0 50%;margin-right:-7.7px;'>32.0547</span><span style='letter-spacing:-0.6px;color:#444'>···</span></div>
<div style="left:298.6px;top:65.1px;width:41.39999999999998px;height:16px;border-left:1px solid #eceef1;"></div>
<div style="left:340px;top:65.1px;width:60.5px;height:16px;border-left:1px solid #eceef1;"></div>
<div class="t" style="left:343px;top:64.8px;width:57.5px;height:16px;line-height:16px;font-size:7px;letter-spacing:0.2px;text-align:left;color:#1a1a1a;overflow:hidden;">消化内科一</div>
<div style="left:400.5px;top:65.1px;width:59.39999999999998px;height:16px;border-left:1px solid #eceef1;"></div>
<div class="t" style="left:403.5px;top:64.8px;width:56.39999999999998px;height:16px;line-height:16px;font-size:7px;letter-spacing:0.2px;text-align:left;color:#1a1a1a;overflow:hidden;">妇科</div>
<div style="left:459.9px;top:65.1px;width:42.10000000000002px;height:16px;border-left:1px solid #eceef1;"></div>
<div class="t" style="left:462.9px;top:64.8px;width:39.10000000000002px;height:16px;line-height:16px;font-size:7px;letter-spacing:0.2px;text-align:left;color:#1a1a1a;overflow:hidden;">韩宝宝</div>
<div style="left:502px;top:65.1px;width:41.39999999999998px;height:16px;border-left:1px solid #eceef1;"></div>
<div class="t" style="left:505px;top:64.8px;width:38.39999999999998px;height:16px;line-height:16px;font-size:7px;letter-spacing:0.2px;text-align:left;color:#1a1a1a;overflow:hidden;"><span style='display:inline-block;font-size:9.6px;transform:scaleX(0.74);transform-origin:0 50%;margin-right:-5.5px;'>30717</span></div>
<div style="left:543.4px;top:65.1px;width:60.10000000000002px;height:16px;border-left:1px solid #eceef1;"></div>
<div class="t" style="left:546.4px;top:64.8px;width:57.10000000000002px;height:16px;line-height:16px;font-size:7px;letter-spacing:0.2px;text-align:left;color:#1a1a1a;overflow:hidden;">厄洛替尼片</div>
<div style="left:603.5px;top:65.1px;width:59.799999999999955px;height:16px;border-left:1px solid #eceef1;"></div>
<div class="t" style="left:606.5px;top:64.8px;width:56.799999999999955px;height:16px;line-height:16px;font-size:7px;letter-spacing:0.2px;text-align:left;color:#1a1a1a;overflow:hidden;">普通片</div>
<div style="left:663.3px;top:65.1px;width:65.70000000000005px;height:16px;border-left:1px solid #eceef1;"></div>
<div class="t" style="left:666.3px;top:64.8px;width:62.700000000000045px;height:16px;line-height:16px;font-size:7px;letter-spacing:0.2px;text-align:left;color:#1a1a1a;overflow:hidden;"><span style='display:inline-block;font-size:9.6px;transform:scaleX(0.74);transform-origin:0 50%;margin-right:-7.7px;'>0.15g*7</span>片</div>
<div style="left:0;top:81.1px;width:703px;height:16px;background:#fff;border-bottom:1px solid #ebedf0;"></div>
<div style="left:0.4000000000000057px;top:81.1px;width:18.099999999999994px;height:16px;border-left:1px solid #eceef1;"></div>
<div style="left:18.5px;top:81.1px;width:29.900000000000006px;height:16px;border-left:1px solid #eceef1;"></div>
<div style="left:48.400000000000006px;top:81.1px;width:41.400000000000006px;height:16px;border-left:1px solid #eceef1;"></div>
<div style="left:89.80000000000001px;top:81.1px;width:42.099999999999966px;height:16px;border-left:1px solid #eceef1;"></div>
<div style="left:131.89999999999998px;top:81.1px;width:41.400000000000034px;height:16px;border-left:1px solid #eceef1;"></div>
<div style="left:173.3px;top:81.1px;width:41.69999999999999px;height:16px;border-left:1px solid #eceef1;"></div>
<div style="left:215px;top:81.1px;width:42.19999999999999px;height:16px;border-left:1px solid #eceef1;"></div>
<div style="left:257.2px;top:81.1px;width:41.400000000000034px;height:16px;border-left:1px solid #eceef1;"></div>
<div style="left:298.6px;top:81.1px;width:41.39999999999998px;height:16px;border-left:1px solid #eceef1;"></div>
<div style="left:340px;top:81.1px;width:60.5px;height:16px;border-left:1px solid #eceef1;"></div>
<div style="left:400.5px;top:81.1px;width:59.39999999999998px;height:16px;border-left:1px solid #eceef1;"></div>
<div style="left:459.9px;top:81.1px;width:42.10000000000002px;height:16px;border-left:1px solid #eceef1;"></div>
<div style="left:502px;top:81.1px;width:41.39999999999998px;height:16px;border-left:1px solid #eceef1;"></div>
<div style="left:543.4px;top:81.1px;width:60.10000000000002px;height:16px;border-left:1px solid #eceef1;"></div>
<div style="left:603.5px;top:81.1px;width:59.799999999999955px;height:16px;border-left:1px solid #eceef1;"></div>
<div style="left:663.3px;top:81.1px;width:65.70000000000005px;height:16px;border-left:1px solid #eceef1;"></div>
<div style="left:0;top:97.1px;width:703px;height:16px;background:#f7f9fc;border-bottom:1px solid #ebedf0;"></div>
<div style="left:0.4000000000000057px;top:97.1px;width:18.099999999999994px;height:16px;border-left:1px solid #eceef1;"></div>
<div style="left:18.5px;top:97.1px;width:29.900000000000006px;height:16px;border-left:1px solid #eceef1;"></div>
<div style="left:48.400000000000006px;top:97.1px;width:41.400000000000006px;height:16px;border-left:1px solid #eceef1;"></div>
<div style="left:89.80000000000001px;top:97.1px;width:42.099999999999966px;height:16px;border-left:1px solid #eceef1;"></div>
<div style="left:131.89999999999998px;top:97.1px;width:41.400000000000034px;height:16px;border-left:1px solid #eceef1;"></div>
<div style="left:173.3px;top:97.1px;width:41.69999999999999px;height:16px;border-left:1px solid #eceef1;"></div>
<div style="left:215px;top:97.1px;width:42.19999999999999px;height:16px;border-left:1px solid #eceef1;"></div>
<div style="left:257.2px;top:97.1px;width:41.400000000000034px;height:16px;border-left:1px solid #eceef1;"></div>
<div style="left:298.6px;top:97.1px;width:41.39999999999998px;height:16px;border-left:1px solid #eceef1;"></div>
<div style="left:340px;top:97.1px;width:60.5px;height:16px;border-left:1px solid #eceef1;"></div>
<div style="left:400.5px;top:97.1px;width:59.39999999999998px;height:16px;border-left:1px solid #eceef1;"></div>
<div style="left:459.9px;top:97.1px;width:42.10000000000002px;height:16px;border-left:1px solid #eceef1;"></div>
<div style="left:502px;top:97.1px;width:41.39999999999998px;height:16px;border-left:1px solid #eceef1;"></div>
<div style="left:543.4px;top:97.1px;width:60.10000000000002px;height:16px;border-left:1px solid #eceef1;"></div>
<div style="left:603.5px;top:97.1px;width:59.799999999999955px;height:16px;border-left:1px solid #eceef1;"></div>
<div style="left:663.3px;top:97.1px;width:65.70000000000005px;height:16px;border-left:1px solid #eceef1;"></div>
<div style="left:0;top:113.1px;width:703px;height:16px;background:#fff;border-bottom:1px solid #ebedf0;"></div>
<div style="left:0.4000000000000057px;top:113.1px;width:18.099999999999994px;height:16px;border-left:1px solid #eceef1;"></div>
<div style="left:18.5px;top:113.1px;width:29.900000000000006px;height:16px;border-left:1px solid #eceef1;"></div>
<div style="left:48.400000000000006px;top:113.1px;width:41.400000000000006px;height:16px;border-left:1px solid #eceef1;"></div>
<div style="left:89.80000000000001px;top:113.1px;width:42.099999999999966px;height:16px;border-left:1px solid #eceef1;"></div>
<div style="left:131.89999999999998px;top:113.1px;width:41.400000000000034px;height:16px;border-left:1px solid #eceef1;"></div>
<div style="left:173.3px;top:113.1px;width:41.69999999999999px;height:16px;border-left:1px solid #eceef1;"></div>
<div style="left:215px;top:113.1px;width:42.19999999999999px;height:16px;border-left:1px solid #eceef1;"></div>
<div style="left:257.2px;top:113.1px;width:41.400000000000034px;height:16px;border-left:1px solid #eceef1;"></div>
<div style="left:298.6px;top:113.1px;width:41.39999999999998px;height:16px;border-left:1px solid #eceef1;"></div>
<div style="left:340px;top:113.1px;width:60.5px;height:16px;border-left:1px solid #eceef1;"></div>
<div style="left:400.5px;top:113.1px;width:59.39999999999998px;height:16px;border-left:1px solid #eceef1;"></div>
<div style="left:459.9px;top:113.1px;width:42.10000000000002px;height:16px;border-left:1px solid #eceef1;"></div>
<div style="left:502px;top:113.1px;width:41.39999999999998px;height:16px;border-left:1px solid #eceef1;"></div>
<div style="left:543.4px;top:113.1px;width:60.10000000000002px;height:16px;border-left:1px solid #eceef1;"></div>
<div style="left:603.5px;top:113.1px;width:59.799999999999955px;height:16px;border-left:1px solid #eceef1;"></div>
<div style="left:663.3px;top:113.1px;width:65.70000000000005px;height:16px;border-left:1px solid #eceef1;"></div>
<div style="left:0;top:129.1px;width:703px;height:16px;background:#f7f9fc;border-bottom:1px solid #ebedf0;"></div>
<div style="left:0.4000000000000057px;top:129.1px;width:18.099999999999994px;height:16px;border-left:1px solid #eceef1;"></div>
<div style="left:18.5px;top:129.1px;width:29.900000000000006px;height:16px;border-left:1px solid #eceef1;"></div>
<div style="left:48.400000000000006px;top:129.1px;width:41.400000000000006px;height:16px;border-left:1px solid #eceef1;"></div>
<div style="left:89.80000000000001px;top:129.1px;width:42.099999999999966px;height:16px;border-left:1px solid #eceef1;"></div>
<div style="left:131.89999999999998px;top:129.1px;width:41.400000000000034px;height:16px;border-left:1px solid #eceef1;"></div>
<div style="left:173.3px;top:129.1px;width:41.69999999999999px;height:16px;border-left:1px solid #eceef1;"></div>
<div style="left:215px;top:129.1px;width:42.19999999999999px;height:16px;border-left:1px solid #eceef1;"></div>
<div style="left:257.2px;top:129.1px;width:41.400000000000034px;height:16px;border-left:1px solid #eceef1;"></div>
<div style="left:298.6px;top:129.1px;width:41.39999999999998px;height:16px;border-left:1px solid #eceef1;"></div>
<div style="left:340px;top:129.1px;width:60.5px;height:16px;border-left:1px solid #eceef1;"></div>
<div style="left:400.5px;top:129.1px;width:59.39999999999998px;height:16px;border-left:1px solid #eceef1;"></div>
<div style="left:459.9px;top:129.1px;width:42.10000000000002px;height:16px;border-left:1px solid #eceef1;"></div>
<div style="left:502px;top:129.1px;width:41.39999999999998px;height:16px;border-left:1px solid #eceef1;"></div>
<div style="left:543.4px;top:129.1px;width:60.10000000000002px;height:16px;border-left:1px solid #eceef1;"></div>
<div style="left:603.5px;top:129.1px;width:59.799999999999955px;height:16px;border-left:1px solid #eceef1;"></div>
<div style="left:663.3px;top:129.1px;width:65.70000000000005px;height:16px;border-left:1px solid #eceef1;"></div>
<div style="left:0;top:0.5px;width:1px;height:176.0px;background:#c9ccd3;"></div>
<div style="left:692.8px;top:17.099999999999994px;width:10px;height:130px;background:#f1f1f1;"></div>
<div style="left:693.8px;top:28.5px;width:8px;height:16.5px;background:#c1c1c1;"></div>
<div style="left:695.6px;top:21.5px;width:0;height:0;border-left:2.2px solid transparent;border-right:2.2px solid transparent;border-bottom:2.4px solid #999;"></div>
<div style="left:0;top:145.1px;width:703px;height:10px;background:#f1f1f1;"></div>
<div style="left:4px;top:147.5px;width:0;height:0;border-top:2.2px solid transparent;border-bottom:2.2px solid transparent;border-right:2.4px solid #999;"></div>
<div style="left:0;top:155.10000000000002px;width:703px;height:18px;background:linear-gradient(#f6f7f9,#e9ebef);"></div>
<div style="left:0px;top:157.5px;width:30px;height:13px;background:#fff;border:1px solid #d9dce1;border-radius:2px;"></div>
<div class="t" style="left:2.5px;top:157.5px;height:13px;line-height:13px;font-size:7.8px;color:#333;">50</div>
<div style="left:0;top:174.5px;width:703px;height:15.4px;background:linear-gradient(#f5f6f8,#e5e8ec);"></div>
<div class="t" style="left:1px;top:174.5px;height:15.4px;line-height:15.4px;font-size:8px;color:#222;font-weight:bold;">数据</div>
<div class="t" style="left:1px;top:196.5px;height:12px;line-height:12px;font-size:8px;color:#555;">给药</div>
<div class="t" style="left:1px;top:217.5px;height:12px;line-height:12px;font-size:8px;color:#555;">问题</div>
<div class="t" style="left:1px;top:236.5px;height:12px;line-height:12px;font-size:8px;color:#555;">审查</div>
</div>
<div style="left:6px;top:353.8px;width:849px;height:19.2px;background:#fff;"></div>
<div class="t" style="left:23px;top:359.5px;height:12px;line-height:12px;font-size:8px;text-align:left;color:#999;">免责声明 <span style='color:#b8a48c'>|</span> 关于美康 <span style='color:#b8a48c'>|</span></div>
<div style="left:100.8px;top:360.2px;width:4.2px;height:3.9px;border:0.8px solid #8a8a8a;"></div>
<div style="left:105.9px;top:360.2px;width:4.2px;height:3.9px;border:0.8px solid #8a8a8a;"></div>
<div style="left:100.8px;top:364.8px;width:4.2px;height:3.9px;border:0.8px solid #8a8a8a;"></div>
<div style="left:106.2px;top:365.2px;width:1.2px;height:1.2px;background:#999;"></div>
<div style="left:108.4px;top:367.2px;width:1.2px;height:1.2px;background:#999;"></div>
<div class="t" style="left:111.5px;top:359.5px;height:12px;line-height:12px;font-size:8px;text-align:left;color:#999;">联系工程师</div>
<div style="left:158px;top:186px;width:841px;height:394px;background:#d9dde3;"></div>
<div style="left:164px;top:192.5px;width:830px;height:381px;background:#fff;"></div>
<div style="left:164px;top:192.4px;width:830px;height:41.3px;background:#3c68d8;border-top:1.4px solid #1f50d6;border-bottom:1.9px solid #1848d0;"></div>
<svg style="left:173.2px;top:202.6px;width:61.2px;height:21.3px;" viewBox="0 0 60 21"><defs><clipPath id="acf"><rect x="0" y="-0.30" width="60" height="2.0"/><rect x="0" y="2.65" width="60" height="2.0"/><rect x="0" y="5.60" width="60" height="2.0"/><rect x="0" y="8.55" width="60" height="2.0"/><rect x="0" y="11.50" width="60" height="2.0"/><rect x="0" y="14.45" width="60" height="2.0"/><rect x="0" y="17.40" width="60" height="2.0"/><rect x="0" y="20.35" width="60" height="2.0"/></clipPath></defs><g fill="#fff" stroke="#fff" stroke-width="1.3" stroke-linejoin="round" font-family="Liberation Sans" font-weight="bold" font-style="italic" font-size="28"><text x="0.2" y="20.4" textLength="19" lengthAdjust="spacingAndGlyphs">P</text><text x="26.6" y="20.4" textLength="17.6" lengthAdjust="spacingAndGlyphs">S</text><text x="41.8" y="20.4" textLength="17.6" lengthAdjust="spacingAndGlyphs">S</text></g><g clip-path="url(#acf)" fill="#fff"><path d="M11.2,20.6 L20.6,0 L28.1,0 L28.4,20.6 Z M15.6,20.6 L23.6,4.5 L23.8,20.6 Z" fill-rule="evenodd"/></g></svg>
<div class="t" style="left:237.2px;top:206.5px;height:22px;line-height:22px;font-size:17px;text-align:left;color:#fff;letter-spacing:-0.9px;">维护工具</div>
<div style="left:533px;top:192.4px;width:101.8px;height:41.3px;background:#234db6;border-top:1.4px solid #0c30b0;border-bottom:1.9px solid #0028a8;"></div>
<svg style="left:371px;top:196px;width:18px;height:17px;" viewBox="0 0 18 17"><g fill="none" stroke="#fff" stroke-width="1.5" stroke-linejoin="round"><rect x="1" y="6.8" width="16" height="9"/><line x1="1.5" y1="9" x2="16.5" y2="9"/><rect x="4.5" y="11" width="5" height="2.6"/><path d="M2.5,6.5 V3.5 Q2.5,1 5,1 H8 V6.5"/></g><g fill="#fff"><rect x="9.6" y="3.2" width="1.3" height="2.4"/><rect x="12" y="3.2" width="1.3" height="2.4"/><rect x="14.3" y="3.2" width="1.3" height="2.4"/></g></svg>
<div class="t" style="left:328.8px;top:215.5px;width:100px;height:15px;line-height:15px;font-size:11px;text-align:center;color:#fff;font-weight:bold;">基础信息管理</div>
<svg style="left:472.1px;top:196px;width:18px;height:17px;" viewBox="0 0 18 17"><g fill="none" stroke="#fff" stroke-width="1.5" stroke-linejoin="round"><rect x="1.6" y="1" width="9.6" height="6.8"/><rect x="0.8" y="7.8" width="8.4" height="8.2"/><rect x="9.2" y="7.8" width="8.4" height="8.2"/></g><g stroke="#fff" stroke-width="1.1" opacity="0.85"><line x1="4" y1="3.6" x2="9" y2="3.6"/><line x1="2.8" y1="10.3" x2="7.2" y2="10.3"/><line x1="11.2" y1="10.3" x2="15.6" y2="10.3"/></g></svg>
<div class="t" style="left:430.7px;top:215.5px;width:100px;height:15px;line-height:15px;font-size:11px;text-align:center;color:#fff;font-weight:bold;">审查规则管理</div>
<svg style="left:573px;top:196.5px;width:18px;height:17px;" viewBox="0 0 18 17"><g fill="none" stroke="#fff" stroke-width="1.5"><rect x="1" y="1.6" width="15" height="14"/></g><g fill="#fff"><rect x="4.6" y="8.2" width="1.4" height="5"/><rect x="7.6" y="7" width="1.4" height="6.2"/><rect x="10.6" y="5.4" width="1.4" height="7.8"/></g></svg>
<div class="t" style="left:530.5px;top:215.5px;width:100px;height:15px;line-height:15px;font-size:11px;text-align:center;color:#fff;font-weight:bold;">统计分析</div>
<svg style="left:674px;top:196.2px;width:18px;height:17px;" viewBox="0 0 18 17"><g fill="none" stroke="#fff" stroke-width="1.5" stroke-linejoin="round" stroke-linecap="round"><rect x="1.8" y="1.2" width="15" height="11.8"/><line x1="2" y1="10.6" x2="16.6" y2="10.6"/><path d="M4.6,6.8 Q6,5 7.5,6.2 Q9,7.6 10.5,6.2 L13,4.4"/><line x1="9.3" y1="13" x2="9.3" y2="15.6"/><line x1="5.6" y1="16" x2="13" y2="16"/></g></svg>
<div class="t" style="left:632.8px;top:215.5px;width:100px;height:15px;line-height:15px;font-size:11px;text-align:center;color:#fff;font-weight:bold;">实时监测</div>
<svg style="left:775.3px;top:196.2px;width:18px;height:17px;" viewBox="0 0 18 17"><g fill="none" stroke="#fff" stroke-width="1.5" stroke-linejoin="round"><path d="M17.00,8.50 L16.91,9.02 L16.67,9.51 L16.30,9.95 L15.86,10.34 L15.40,10.67 L14.97,10.97 L14.62,11.27 L14.37,11.60 L14.21,11.98 L14.13,12.43 L14.08,12.95 L14.02,13.52 L13.91,14.10 L13.71,14.64 L13.41,15.09 L13.00,15.43 L12.51,15.61 L11.96,15.65 L11.39,15.55 L10.84,15.36 L10.32,15.13 L9.84,14.91 L9.41,14.76 L9.00,14.70 L8.59,14.76 L8.16,14.91 L7.68,15.13 L7.16,15.36 L6.61,15.55 L6.04,15.65 L5.49,15.61 L5.00,15.43 L4.59,15.09 L4.29,14.64 L4.09,14.10 L3.98,13.52 L3.92,12.95 L3.87,12.43 L3.79,11.98 L3.63,11.60 L3.38,11.27 L3.03,10.97 L2.60,10.67 L2.14,10.34 L1.70,9.95 L1.33,9.51 L1.09,9.02 L1.00,8.50 L1.09,7.98 L1.33,7.49 L1.70,7.05 L2.14,6.66 L2.60,6.33 L3.03,6.03 L3.38,5.73 L3.63,5.40 L3.79,5.02 L3.87,4.57 L3.92,4.05 L3.98,3.48 L4.09,2.90 L4.29,2.36 L4.59,1.91 L5.00,1.57 L5.49,1.39 L6.04,1.35 L6.61,1.45 L7.16,1.64 L7.68,1.87 L8.16,2.09 L8.59,2.24 L9.00,2.30 L9.41,2.24 L9.84,2.09 L10.32,1.87 L10.84,1.64 L11.39,1.45 L11.96,1.35 L12.51,1.39 L13.00,1.57 L13.41,1.91 L13.71,2.36 L13.91,2.90 L14.02,3.48 L14.08,4.05 L14.13,4.57 L14.21,5.02 L14.37,5.40 L14.62,5.73 L14.97,6.03 L15.40,6.33 L15.86,6.66 L16.30,7.05 L16.67,7.49 L16.91,7.98Z"/><circle cx="9" cy="8.5" r="2.4"/></g></svg>
<div class="t" style="left:734.0px;top:215.5px;width:100px;height:15px;line-height:15px;font-size:11px;text-align:center;color:#fff;font-weight:bold;">系统设置</div>
<div style="left:164px;top:233.7px;width:830px;height:1.5px;background:#fff;"></div>
<div style="left:164px;top:234px;width:172.7px;height:340px;background:#dfe3ec;"></div>
<svg style="left:169px;top:242.3px;width:14px;height:12px;" viewBox="0 0 15 13"><g fill="none" stroke="#555" stroke-width="1.2" stroke-linejoin="round"><path d="M1,2 Q1,1 2,1 H5.5 L7,2.6 H13 Q14,2.6 14,3.6 V11 Q14,12 13,12 H2 Q1,12 1,11 Z"/><path d="M3.5,7.6 H5.5 L6.6,5.6 L8,9 L9,7.2 H11.5" stroke-width="1.08"/></g></svg>
<div class="t" style="left:186.2px;top:240px;height:16px;line-height:16px;font-size:11.3px;text-align:left;color:#222;font-weight:bold;">监测结果</div>
<div style="left:319.6px;top:245.7px;width:0;height:0;border-left:3.6px solid transparent;border-right:3.6px solid transparent;border-top:4.8px solid #333;"></div>
<div style="left:164px;top:262.8px;width:172.7px;height:1.5px;background:#eef0f5;"></div>
<div style="left:164px;top:264.3px;width:172.7px;height:293.2px;background:#cdd3dd;"></div>
<div style="left:183.3px;top:274.8px;width:1.8px;height:1.8px;background:#555;border-radius:0.5px;"></div>
<div style="left:183.3px;top:277.3px;width:1.8px;height:1.8px;background:#555;border-radius:0.5px;"></div>
<div style="left:186.10000000000002px;top:274.8px;width:1.8px;height:1.8px;background:#555;border-radius:0.5px;"></div>
<div style="left:186.10000000000002px;top:277.3px;width:1.8px;height:1.8px;background:#555;border-radius:0.5px;"></div>
<div class="t" style="left:194.2px;top:270.90000000000003px;height:16px;line-height:16px;font-size:12px;text-align:left;letter-spacing:-0.62px;color:#4a4a4a;">问题明细清单</div>
<div style="left:164px;top:293.62px;width:172.7px;height:29.32px;background:#fff;border-left:3px solid #2f5bd8;"></div>
<div style="left:183.3px;top:304.12px;width:1.8px;height:1.8px;background:#555;border-radius:0.5px;"></div>
<div style="left:183.3px;top:306.62px;width:1.8px;height:1.8px;background:#555;border-radius:0.5px;"></div>
<div style="left:186.10000000000002px;top:304.12px;width:1.8px;height:1.8px;background:#555;border-radius:0.5px;"></div>
<div style="left:186.10000000000002px;top:306.62px;width:1.8px;height:1.8px;background:#555;border-radius:0.5px;"></div>
<div class="t" style="left:194.2px;top:300.22px;height:16px;line-height:16px;font-size:12px;text-align:left;letter-spacing:-0.62px;color:#222;">问题类型统计</div>
<div style="left:183.3px;top:333.44px;width:1.8px;height:1.8px;background:#555;border-radius:0.5px;"></div>
<div style="left:183.3px;top:335.94px;width:1.8px;height:1.8px;background:#555;border-radius:0.5px;"></div>
<div style="left:186.10000000000002px;top:333.44px;width:1.8px;height:1.8px;background:#555;border-radius:0.5px;"></div>
<div style="left:186.10000000000002px;top:335.94px;width:1.8px;height:1.8px;background:#555;border-radius:0.5px;"></div>
<div class="t" style="left:194.2px;top:329.54px;height:16px;line-height:16px;font-size:12px;text-align:left;letter-spacing:-0.62px;color:#4a4a4a;">警示级别统计</div>
<div style="left:183.3px;top:362.76px;width:1.8px;height:1.8px;background:#555;border-radius:0.5px;"></div>
<div style="left:183.3px;top:365.26px;width:1.8px;height:1.8px;background:#555;border-radius:0.5px;"></div>
<div style="left:186.10000000000002px;top:362.76px;width:1.8px;height:1.8px;background:#555;border-radius:0.5px;"></div>
<div style="left:186.10000000000002px;top:365.26px;width:1.8px;height:1.8px;background:#555;border-radius:0.5px;"></div>
<div class="t" style="left:194.2px;top:358.86px;height:16px;line-height:16px;font-size:12px;text-align:left;letter-spacing:-0.62px;color:#4a4a4a;">问题类别统计</div>
<div style="left:183.3px;top:392.08000000000004px;width:1.8px;height:1.8px;background:#555;border-radius:0.5px;"></div>
<div style="left:183.3px;top:394.58000000000004px;width:1.8px;height:1.8px;background:#555;border-radius:0.5px;"></div>
<div style="left:186.10000000000002px;top:392.08000000000004px;width:1.8px;height:1.8px;background:#555;border-radius:0.5px;"></div>
<div style="left:186.10000000000002px;top:394.58000000000004px;width:1.8px;height:1.8px;background:#555;border-radius:0.5px;"></div>
<div class="t" style="left:194.2px;top:388.18000000000006px;height:16px;line-height:16px;font-size:12px;text-align:left;letter-spacing:-0.62px;color:#4a4a4a;">科室问题类型统计</div>
<div style="left:183.3px;top:421.4px;width:1.8px;height:1.8px;background:#555;border-radius:0.5px;"></div>
<div style="left:183.3px;top:423.9px;width:1.8px;height:1.8px;background:#555;border-radius:0.5px;"></div>
<div style="left:186.10000000000002px;top:421.4px;width:1.8px;height:1.8px;background:#555;border-radius:0.5px;"></div>
<div style="left:186.10000000000002px;top:423.9px;width:1.8px;height:1.8px;background:#555;border-radius:0.5px;"></div>
<div class="t" style="left:194.2px;top:417.5px;height:16px;line-height:16px;font-size:12px;text-align:left;letter-spacing:-0.62px;color:#4a4a4a;">科室警示级别统计</div>
<div style="left:183.3px;top:450.72px;width:1.8px;height:1.8px;background:#555;border-radius:0.5px;"></div>
<div style="left:183.3px;top:453.22px;width:1.8px;height:1.8px;background:#555;border-radius:0.5px;"></div>
<div style="left:186.10000000000002px;top:450.72px;width:1.8px;height:1.8px;background:#555;border-radius:0.5px;"></div>
<div style="left:186.10000000000002px;top:453.22px;width:1.8px;height:1.8px;background:#555;border-radius:0.5px;"></div>
<div class="t" style="left:194.2px;top:446.82000000000005px;height:16px;line-height:16px;font-size:12px;text-align:left;letter-spacing:-0.62px;color:#4a4a4a;">医生问题类型统计</div>
<div style="left:183.3px;top:480.04px;width:1.8px;height:1.8px;background:#555;border-radius:0.5px;"></div>
<div style="left:183.3px;top:482.54px;width:1.8px;height:1.8px;background:#555;border-radius:0.5px;"></div>
<div style="left:186.10000000000002px;top:480.04px;width:1.8px;height:1.8px;background:#555;border-radius:0.5px;"></div>
<div style="left:186.10000000000002px;top:482.54px;width:1.8px;height:1.8px;background:#555;border-radius:0.5px;"></div>
<div class="t" style="left:194.2px;top:476.14000000000004px;height:16px;line-height:16px;font-size:12px;text-align:left;letter-spacing:-0.62px;color:#4a4a4a;">医生警示级别统计</div>
<div style="left:183.3px;top:509.36px;width:1.8px;height:1.8px;background:#555;border-radius:0.5px;"></div>
<div style="left:183.3px;top:511.86px;width:1.8px;height:1.8px;background:#555;border-radius:0.5px;"></div>
<div style="left:186.10000000000002px;top:509.36px;width:1.8px;height:1.8px;background:#555;border-radius:0.5px;"></div>
<div style="left:186.10000000000002px;top:511.86px;width:1.8px;height:1.8px;background:#555;border-radius:0.5px;"></div>
<div class="t" style="left:194.2px;top:505.46000000000004px;height:16px;line-height:16px;font-size:12px;text-align:left;letter-spacing:-0.62px;color:#4a4a4a;">药品问题类型统计</div>
<div style="left:183.3px;top:538.6800000000001px;width:1.8px;height:1.8px;background:#555;border-radius:0.5px;"></div>
<div style="left:183.3px;top:541.1800000000001px;width:1.8px;height:1.8px;background:#555;border-radius:0.5px;"></div>
<div style="left:186.10000000000002px;top:538.6800000000001px;width:1.8px;height:1.8px;background:#555;border-radius:0.5px;"></div>
<div style="left:186.10000000000002px;top:541.1800000000001px;width:1.8px;height:1.8px;background:#555;border-radius:0.5px;"></div>
<div class="t" style="left:194.2px;top:534.7800000000001px;height:16px;line-height:16px;font-size:12px;text-align:left;letter-spacing:-0.62px;color:#4a4a4a;">药品警示级别统计</div>
<svg style="left:169px;top:566.0px;width:12px;height:11px;" viewBox="0 0 14 13"><g fill="none" stroke="#555" stroke-width="1.3" stroke-linejoin="round"><path d="M3,5 V1.5 H11 V5"/><rect x="1" y="5" width="12" height="7" rx="1"/><line x1="1" y1="8.5" x2="13" y2="8.5"/></g></svg>
<div class="t" style="left:186.2px;top:564.0px;height:16px;line-height:16px;font-size:11.3px;text-align:left;color:#222;font-weight:bold;">用药理由</div>
<div style="left:321px;top:568.5px;width:0;height:0;border-top:3.3px solid transparent;border-bottom:3.3px solid transparent;border-left:4px solid #333;"></div>
<div style="left:338.6px;top:233.5px;width:12px;height:340px;background:#f1f1f1;"></div>
<div style="left:338.6px;top:249px;width:12px;height:325px;background:#c1c1c1;"></div>
<div style="left:341.6px;top:238.6px;width:0;height:0;border-left:3px solid transparent;border-right:3px solid transparent;border-bottom:3.2px solid #999;"></div>
<div style="left:352.9px;top:441.5px;width:9.3px;height:27.2px;background:#2aa4e8;border-radius:4.6px/5px;"></div>
<svg style="left:353.5px;top:450.5px;width:8px;height:7px;" viewBox="0 0 8 7"><path d="M7.2,0.6 L1,3.5 L7.2,6.4" fill="none" stroke="#fff" stroke-width="1.5" stroke-linecap="round" stroke-linejoin="round"/></svg>
<div style="left:362px;top:233.5px;width:632px;height:64.7px;background:linear-gradient(#f8f9fb,#e6e9ee 40%,#e6e9ee);"></div>
<div class="t" style="left:792px;top:248px;height:22px;line-height:22px;font-size:17px;text-align:left;color:#222;">问题类型统计</div>
<div style="left:362px;top:298.2px;width:632px;height:21.6px;background:#f0f0f0;border-top:1px solid #cfcfcf;border-bottom:1px solid #c6c6c6;border-left:1px solid #cfcfcf;"></div>
<div style="left:365.3px;top:299.6px;width:59.4px;height:21.2px;background:#fff;border:1px solid #c6c6c6;border-bottom:none;"></div>
<div class="t" style="left:365.3px;top:301.5px;width:59.4px;height:16px;line-height:16px;font-size:10px;text-align:center;color:#333;">统计结果</div>
<div style="left:427.8px;top:299.6px;width:58.4px;height:20.2px;background:linear-gradient(#f4f4f4,#e4e4e4);border:1px solid #c6c6c6;border-bottom:none;"></div>
<div class="t" style="left:427.8px;top:301.5px;width:58.4px;height:16px;line-height:16px;font-size:10px;text-align:center;color:#333;">统计图表</div>
<div style="left:362px;top:319.8px;width:632px;height:254px;background:#fff;border-left:1px solid #cfcfcf;"></div>
<div style="left:367.3px;top:324.4px;width:626.7px;height:22.7px;background:linear-gradient(#f6f7f9,#e4e7ec);border-top:1px solid #d0d3d9;border-bottom:1px solid #b9bec7;"></div>
<div style="left:367.3px;top:324.4px;width:24.19999999999999px;height:22.7px;border-left:1px solid #cdd1d8;"></div>
<div style="left:391.5px;top:324.4px;width:163.0px;height:22.7px;border-left:1px solid #cdd1d8;"></div>
<div class="t" style="left:391.5px;top:324.4px;width:163.0px;height:22.7px;line-height:22.7px;font-size:10px;letter-spacing:-0.5px;text-align:center;color:#333;">问题类型</div>
<div style="left:554.5px;top:324.4px;width:98.0px;height:22.7px;border-left:1px solid #cdd1d8;"></div>
<div class="t" style="left:554.5px;top:324.4px;width:98.0px;height:22.7px;line-height:22.7px;font-size:10px;letter-spacing:-0.5px;text-align:center;color:#333;">审查点</div>
<div style="left:652.5px;top:324.4px;width:98.0px;height:22.7px;border-left:1px solid #cdd1d8;"></div>
<div class="t" style="left:652.5px;top:324.4px;width:98.0px;height:22.7px;line-height:22.7px;font-size:10px;letter-spacing:-0.5px;text-align:center;color:#333;">问题数(个)</div>
<div style="left:750.5px;top:324.4px;width:98.29999999999995px;height:22.7px;border-left:1px solid #cdd1d8;"></div>
<div class="t" style="left:750.5px;top:324.4px;width:98.29999999999995px;height:22.7px;line-height:22.7px;font-size:10px;letter-spacing:-0.5px;text-align:center;color:#333;">占本问题类型比例</div>
<div style="left:848.8px;top:324.4px;width:97.5px;height:22.7px;border-left:1px solid #cdd1d8;"></div>
<div class="t" style="left:848.8px;top:324.4px;width:97.5px;height:22.7px;line-height:22.7px;font-size:10px;letter-spacing:-0.5px;text-align:center;color:#333;">占总问题比例</div>
<div style="left:946.3px;top:324.4px;width:47.700000000000045px;height:22.7px;border-left:1px solid #cdd1d8;"></div>
<div style="left:367.3px;top:347.09999999999997px;width:626.7px;height:192.90000000000003px;overflow:hidden;">
<div style="left:0;top:0.0px;width:579.0px;height:21.8px;background:#fff;border-bottom:1px solid #e6e8ec;"></div>
<div class="t" style="left:0px;top:-0.4px;width:24.19999999999999px;height:21.8px;line-height:21.8px;text-align:center;"><span style="display:inline-block;font-size:11.5px;transform:scaleX(0.88);transform-origin:50% 50%;color:#333;">1</span></div>
<div class="t" style="left:192.2px;top:0.2px;height:21.8px;line-height:21.8px;font-size:10px;color:#333;">每次剂量</div>
<div class="t" style="left:285.2px;top:-0.4px;width:94.5px;height:21.8px;line-height:21.8px;text-align:right;"><span style="display:inline-block;font-size:11.5px;transform:scaleX(0.88);transform-origin:100% 50%;color:#2233dd;text-decoration:underline;">2</span></div>
<div class="t" style="left:383.2px;top:-0.4px;width:94.3px;height:21.8px;line-height:21.8px;text-align:right;"><span style="display:inline-block;font-size:11.5px;transform:scaleX(0.88);transform-origin:100% 50%;color:#333;">20.00%</span></div>
<div class="t" style="left:481.49999999999994px;top:-0.4px;width:93.5px;height:21.8px;line-height:21.8px;text-align:right;"><span style="display:inline-block;font-size:11.5px;transform:scaleX(0.88);transform-origin:100% 50%;color:#333;">2.44%</span></div>
<div style="left:0;top:21.8px;width:579.0px;height:21.8px;background:#f6f8fc;border-bottom:1px solid #e6e8ec;"></div>
<div class="t" style="left:0px;top:21.400000000000002px;width:24.19999999999999px;height:21.8px;line-height:21.8px;text-align:center;"><span style="display:inline-block;font-size:11.5px;transform:scaleX(0.88);transform-origin:50% 50%;color:#333;">2</span></div>
<div class="t" style="left:192.2px;top:22.0px;height:21.8px;line-height:21.8px;font-size:10px;color:#333;">给药频次</div>
<div class="t" style="left:285.2px;top:21.400000000000002px;width:94.5px;height:21.8px;line-height:21.8px;text-align:right;"><span style="display:inline-block;font-size:11.5px;transform:scaleX(0.88);transform-origin:100% 50%;color:#2233dd;text-decoration:underline;">2</span></div>
<div class="t" style="left:383.2px;top:21.400000000000002px;width:94.3px;height:21.8px;line-height:21.8px;text-align:right;"><span style="display:inline-block;font-size:11.5px;transform:scaleX(0.88);transform-origin:100% 50%;color:#333;">20.00%</span></div>
<div class="t" style="left:481.49999999999994px;top:21.400000000000002px;width:93.5px;height:21.8px;line-height:21.8px;text-align:right;"><span style="display:inline-block;font-size:11.5px;transform:scaleX(0.88);transform-origin:100% 50%;color:#333;">2.44%</span></div>
<div style="left:0;top:43.6px;width:579.0px;height:21.8px;background:#fff;border-bottom:1px solid #e6e8ec;"></div>
<div class="t" style="left:0px;top:43.2px;width:24.19999999999999px;height:21.8px;line-height:21.8px;text-align:center;"><span style="display:inline-block;font-size:11.5px;transform:scaleX(0.88);transform-origin:50% 50%;color:#333;">3</span></div>
<div class="t" style="left:192.2px;top:43.800000000000004px;height:21.8px;line-height:21.8px;font-size:10px;color:#333;">每日剂量</div>
<div class="t" style="left:285.2px;top:43.2px;width:94.5px;height:21.8px;line-height:21.8px;text-align:right;"><span style="display:inline-block;font-size:11.5px;transform:scaleX(0.88);transform-origin:100% 50%;color:#2233dd;text-decoration:underline;">5</span></div>
<div class="t" style="left:383.2px;top:43.2px;width:94.3px;height:21.8px;line-height:21.8px;text-align:right;"><span style="display:inline-block;font-size:11.5px;transform:scaleX(0.88);transform-origin:100% 50%;color:#333;">50.00%</span></div>
<div class="t" style="left:481.49999999999994px;top:43.2px;width:93.5px;height:21.8px;line-height:21.8px;text-align:right;"><span style="display:inline-block;font-size:11.5px;transform:scaleX(0.88);transform-origin:100% 50%;color:#333;">6.10%</span></div>
<div style="left:0;top:65.4px;width:579.0px;height:21.8px;background:#f6f8fc;border-bottom:1px solid #e6e8ec;"></div>
<div class="t" style="left:0px;top:65.0px;width:24.19999999999999px;height:21.8px;line-height:21.8px;text-align:center;"><span style="display:inline-block;font-size:11.5px;transform:scaleX(0.88);transform-origin:50% 50%;color:#333;">4</span></div>
<div class="t" style="left:192.2px;top:65.60000000000001px;height:21.8px;line-height:21.8px;font-size:10px;color:#333;">中药饮片剂量</div>
<div class="t" style="left:285.2px;top:65.0px;width:94.5px;height:21.8px;line-height:21.8px;text-align:right;"><span style="display:inline-block;font-size:11.5px;transform:scaleX(0.88);transform-origin:100% 50%;color:#2233dd;text-decoration:underline;">1</span></div>
<div class="t" style="left:383.2px;top:65.0px;width:94.3px;height:21.8px;line-height:21.8px;text-align:right;"><span style="display:inline-block;font-size:11.5px;transform:scaleX(0.88);transform-origin:100% 50%;color:#333;">10.00%</span></div>
<div class="t" style="left:481.49999999999994px;top:65.0px;width:93.5px;height:21.8px;line-height:21.8px;text-align:right;"><span style="display:inline-block;font-size:11.5px;transform:scaleX(0.88);transform-origin:100% 50%;color:#333;">1.22%</span></div>
<div style="left:0;top:87.2px;width:579.0px;height:21.8px;background:#fff;border-bottom:1px solid #e6e8ec;"></div>
<div class="t" style="left:0px;top:86.8px;width:24.19999999999999px;height:21.8px;line-height:21.8px;text-align:center;"><span style="display:inline-block;font-size:11.5px;transform:scaleX(0.88);transform-origin:50% 50%;color:#333;">5</span></div>
<div class="t" style="left:192.2px;top:87.4px;height:21.8px;line-height:21.8px;font-size:10px;color:#333;">合计</div>
<div class="t" style="left:285.2px;top:86.8px;width:94.5px;height:21.8px;line-height:21.8px;text-align:right;"><span style="display:inline-block;font-size:11.5px;transform:scaleX(0.88);transform-origin:100% 50%;color:#ee2222;text-decoration:underline;">10</span></div>
<div class="t" style="left:383.2px;top:86.8px;width:94.3px;height:21.8px;line-height:21.8px;text-align:right;"><span style="display:inline-block;font-size:11.5px;transform:scaleX(0.88);transform-origin:100% 50%;color:#ee2222;">100.00%</span></div>
<div class="t" style="left:481.49999999999994px;top:86.8px;width:93.5px;height:21.8px;line-height:21.8px;text-align:right;"><span style="display:inline-block;font-size:11.5px;transform:scaleX(0.88);transform-origin:100% 50%;color:#ee2222;">12.20%</span></div>
<div style="left:0;top:109.0px;width:579.0px;height:21.8px;background:#f6f8fc;border-bottom:1px solid #e6e8ec;"></div>
<div class="t" style="left:0px;top:108.6px;width:24.19999999999999px;height:21.8px;line-height:21.8px;text-align:center;"><span style="display:inline-block;font-size:11.5px;transform:scaleX(0.88);transform-origin:50% 50%;color:#333;">6</span></div>
<div class="t" style="left:192.2px;top:109.2px;height:21.8px;line-height:21.8px;font-size:10px;color:#333;">每次剂量</div>
<div class="t" style="left:285.2px;top:108.6px;width:94.5px;height:21.8px;line-height:21.8px;text-align:right;"><span style="display:inline-block;font-size:11.5px;transform:scaleX(0.88);transform-origin:100% 50%;color:#2233dd;text-decoration:underline;">1</span></div>
<div class="t" style="left:383.2px;top:108.6px;width:94.3px;height:21.8px;line-height:21.8px;text-align:right;"><span style="display:inline-block;font-size:11.5px;transform:scaleX(0.88);transform-origin:100% 50%;color:#333;">100.00%</span></div>
<div class="t" style="left:481.49999999999994px;top:108.6px;width:93.5px;height:21.8px;line-height:21.8px;text-align:right;"><span style="display:inline-block;font-size:11.5px;transform:scaleX(0.88);transform-origin:100% 50%;color:#333;">1.22%</span></div>
<div style="left:0;top:130.8px;width:579.0px;height:21.8px;background:#fff;border-bottom:1px solid #e6e8ec;"></div>
<div class="t" style="left:0px;top:130.4px;width:24.19999999999999px;height:21.8px;line-height:21.8px;text-align:center;"><span style="display:inline-block;font-size:11.5px;transform:scaleX(0.88);transform-origin:50% 50%;color:#333;">7</span></div>
<div class="t" style="left:192.2px;top:131.0px;height:21.8px;line-height:21.8px;font-size:10px;color:#333;">合计</div>
<div class="t" style="left:285.2px;top:130.4px;width:94.5px;height:21.8px;line-height:21.8px;text-align:right;"><span style="display:inline-block;font-size:11.5px;transform:scaleX(0.88);transform-origin:100% 50%;color:#ee2222;text-decoration:underline;">1</span></div>
<div class="t" style="left:383.2px;top:130.4px;width:94.3px;height:21.8px;line-height:21.8px;text-align:right;"><span style="display:inline-block;font-size:11.5px;transform:scaleX(0.88);transform-origin:100% 50%;color:#ee2222;">100.00%</span></div>
<div class="t" style="left:481.49999999999994px;top:130.4px;width:93.5px;height:21.8px;line-height:21.8px;text-align:right;"><span style="display:inline-block;font-size:11.5px;transform:scaleX(0.88);transform-origin:100% 50%;color:#ee2222;">1.22%</span></div>
<div style="left:0;top:152.6px;width:579.0px;height:21.8px;background:#f6f8fc;border-bottom:1px solid #e6e8ec;"></div>
<div class="t" style="left:0px;top:152.2px;width:24.19999999999999px;height:21.8px;line-height:21.8px;text-align:center;"><span style="display:inline-block;font-size:11.5px;transform:scaleX(0.88);transform-origin:50% 50%;color:#333;">8</span></div>
<div class="t" style="left:192.2px;top:152.79999999999998px;height:21.8px;line-height:21.8px;font-size:10px;color:#333;">相互作用</div>
<div class="t" style="left:285.2px;top:152.2px;width:94.5px;height:21.8px;line-height:21.8px;text-align:right;"><span style="display:inline-block;font-size:11.5px;transform:scaleX(0.88);transform-origin:100% 50%;color:#2233dd;text-decoration:underline;">13</span></div>
<div class="t" style="left:383.2px;top:152.2px;width:94.3px;height:21.8px;line-height:21.8px;text-align:right;"><span style="display:inline-block;font-size:11.5px;transform:scaleX(0.88);transform-origin:100% 50%;color:#333;">81.25%</span></div>
<div class="t" style="left:481.49999999999994px;top:152.2px;width:93.5px;height:21.8px;line-height:21.8px;text-align:right;"><span style="display:inline-block;font-size:11.5px;transform:scaleX(0.88);transform-origin:100% 50%;color:#333;">15.85%</span></div>
<div style="left:0;top:174.4px;width:579.0px;height:21.8px;background:#dde5f3;border-bottom:1px solid #e6e8ec;"></div>
<div class="t" style="left:0px;top:174.0px;width:24.19999999999999px;height:21.8px;line-height:21.8px;text-align:center;"><span style="display:inline-block;font-size:11.5px;transform:scaleX(0.88);transform-origin:50% 50%;color:#333;">9</span></div>
<div class="t" style="left:192.2px;top:174.6px;height:21.8px;line-height:21.8px;font-size:10px;color:#333;">十八反十九畏</div>
<div class="t" style="left:285.2px;top:174.0px;width:94.5px;height:21.8px;line-height:21.8px;text-align:right;"><span style="display:inline-block;font-size:11.5px;transform:scaleX(0.88);transform-origin:100% 50%;color:#2233dd;text-decoration:underline;">3</span></div>
<div class="t" style="left:383.2px;top:174.0px;width:94.3px;height:21.8px;line-height:21.8px;text-align:right;"><span style="display:inline-block;font-size:11.5px;transform:scaleX(0.88);transform-origin:100% 50%;color:#333;">18.75%</span></div>
<div class="t" style="left:481.49999999999994px;top:174.0px;width:93.5px;height:21.8px;line-height:21.8px;text-align:right;"><span style="display:inline-block;font-size:11.5px;transform:scaleX(0.88);transform-origin:100% 50%;color:#333;">3.66%</span></div>
<div style="left:24.19999999999999px;top:0.0px;width:163.0px;height:109.0px;background:#fff;border-bottom:1px solid #e6e8ec;"></div>
<div class="t" style="left:29.19999999999999px;top:0.2px;height:109.0px;line-height:109.0px;font-size:10px;color:#333;">剂量范围</div>
<div style="left:24.19999999999999px;top:109.0px;width:163.0px;height:43.6px;background:#f6f8fc;border-bottom:1px solid #e6e8ec;"></div>
<div class="t" style="left:29.19999999999999px;top:109.2px;height:43.6px;line-height:43.6px;font-size:10px;color:#333;">肾损害剂量</div>
<div style="left:24.19999999999999px;top:152.6px;width:163.0px;height:65.4px;background:#f6f8fc;border-bottom:1px solid #e6e8ec;"></div>
<div class="t" style="left:29.19999999999999px;top:152.79999999999998px;height:65.4px;line-height:65.4px;font-size:10px;color:#333;">相互作用</div>
<div style="left:24.19999999999999px;top:0;width:1px;height:300px;background:#e3e5e9;"></div>
<div style="left:187.2px;top:0;width:1px;height:300px;background:#e3e5e9;"></div>
<div style="left:285.2px;top:0;width:1px;height:300px;background:#e3e5e9;"></div>
<div style="left:383.2px;top:0;width:1px;height:300px;background:#e3e5e9;"></div>
<div style="left:481.49999999999994px;top:0;width:1px;height:300px;background:#e3e5e9;"></div>
<div style="left:579.0px;top:0;width:1px;height:300px;background:#e3e5e9;"></div>
</div>
<div style="left:367.3px;top:324.4px;width:1px;height:241px;background:#c9cdd4;"></div>
<div style="left:367.3px;top:540px;width:626.7px;height:25.5px;background:linear-gradient(#f6f7f9,#e6e8ec);border-top:1px solid #dadde2;border-left:1px solid #c9cdd4;"></div>
<div style="left:370.8px;top:543.5px;width:43.7px;height:19px;background:#fff;border:1px solid #d6d9de;border-radius:3px;"></div>
<div class="t" style="left:374.8px;top:545.5px;height:15px;line-height:15px;font-size:11px;text-align:left;color:#333;">50</div>
<div style="left:403px;top:551.8px;width:0;height:0;border-left:2.8px solid transparent;border-right:2.8px solid transparent;border-top:3px solid #222;"></div>
<div style="left:422px;top:545.5px;width:1px;height:14.5px;background:#b8bcc4;"></div>
<div style="left:575px;top:545.5px;width:1px;height:14.5px;background:#b8bcc4;"></div>
<svg style="left:436.5px;top:548.5px;width:9px;height:10px;" viewBox="0 0 9 10"><rect x="0" y="0" width="2" height="10" fill="#86a9e6"/><path d="M9,0 L3,5 L9,10 Z" fill="#86a9e6"/></svg>
<svg style="left:459px;top:549px;width:6px;height:9px;" viewBox="0 0 6 9"><path d="M6,0 L0,4.5 L6,9 Z" fill="#86a9e6"/></svg>
<div style="left:474.3px;top:543.7px;width:29.5px;height:17.5px;background:#fff;border:1px solid #cfd2d7;"></div>
<div class="t" style="left:474.3px;top:545px;width:29.5px;height:15px;line-height:15px;font-size:11px;text-align:center;color:#222;">1</div>
<div class="t" style="left:510px;top:545px;height:15px;line-height:15px;font-size:11px;text-align:left;color:#333;">/ 1</div>
<svg style="left:534.2px;top:549px;width:5px;height:8.5px;" viewBox="0 0 5 8.5"><path d="M0,0 L5,4.25 L0,8.5 Z" fill="#86a9e6"/></svg>
<svg style="left:554.2px;top:548.5px;width:9px;height:10px;" viewBox="0 0 9 10"><path d="M0,0 L5.5,5 L0,10 Z" fill="#86a9e6"/><rect x="6" y="0" width="2.5" height="10" fill="#86a9e6"/></svg>
<svg style="left:586.8px;top:546.9px;width:14.2px;height:12.9px;" viewBox="0 0 14 13"><g fill="none" stroke="#55ab55" stroke-width="2.5" stroke-linecap="round"><path d="M1.2,6.8 Q2.2,3.2 7.5,3.2"/><path d="M12.8,6.4 Q11.8,9.9 6.5,9.9"/></g><path d="M7.8,0.2 L12.2,3.1 L7.8,6.2 Z" fill="#4a9e4a"/><path d="M6.2,6.8 L1.8,9.9 L6.2,12.9 Z" fill="#4a9e4a"/></svg>
<div style="left:362px;top:565.5px;width:632px;height:8px;background:#fff;"></div>
<div style="left:362px;top:569.5px;width:632px;height:4.5px;background:#eef0f3;"></div>
<div style="left:158px;top:573.5px;width:841px;height:6.5px;background:#d9dde3;"></div>
</body></html>
